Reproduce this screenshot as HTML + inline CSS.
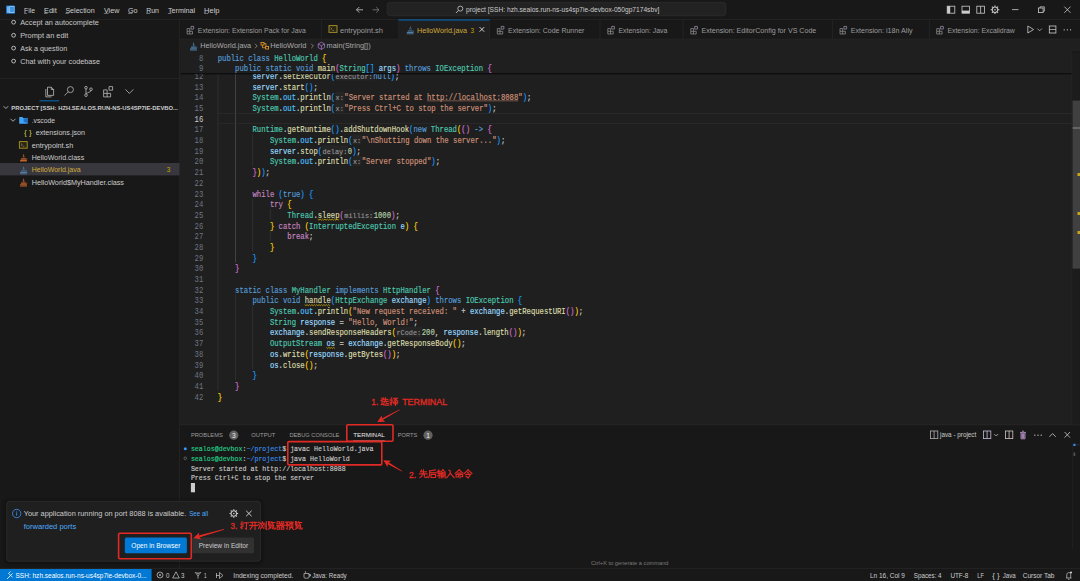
<!DOCTYPE html>
<html><head><meta charset="utf-8"><title>VS Code</title>
<style>html,body{margin:0;padding:0;background:#181818;overflow:hidden;width:1080px;height:581px}
svg{display:block;font-family:"Liberation Sans", sans-serif}</style></head>
<body><svg width="1080" height="581" viewBox="0 0 1080 581">
<defs><filter id="blur" x="-10%" y="-20%" width="120%" height="140%"><feGaussianBlur stdDeviation="2"/></filter></defs>
<rect x="0.00" y="0.00" width="1080.00" height="581.00" fill="#181818" />
<rect x="180.00" y="39.40" width="900.00" height="385.60" fill="#1f1f1f" />
<rect x="0.00" y="19.20" width="1080.00" height="0.60" fill="#2b2b2b" />
<rect x="6.00" y="5.50" width="9.00" height="8.20" fill="#1a73c8" rx="0.6" />
<rect x="7.20" y="6.40" width="1.60" height="6.40" fill="#8cc4f2" />
<rect x="9.40" y="6.60" width="4.60" height="6.00" fill="none" stroke="#9fd0f7" stroke-width="0.8"/>
<rect x="10.00" y="7.20" width="3.40" height="4.80" fill="#3d95e0" />
<text x="24.10" y="12.80" font-size="7.5" fill="#cccccc" textLength="11.00" lengthAdjust="spacingAndGlyphs" >File</text>
<rect x="24.10" y="13.10" width="2.80" height="0.55" fill="#b0b0b0" />
<text x="44.00" y="12.80" font-size="7.5" fill="#cccccc" textLength="12.80" lengthAdjust="spacingAndGlyphs" >Edit</text>
<rect x="44.00" y="13.10" width="3.60" height="0.55" fill="#b0b0b0" />
<text x="65.40" y="12.80" font-size="7.5" fill="#cccccc" textLength="29.20" lengthAdjust="spacingAndGlyphs" >Selection</text>
<rect x="65.40" y="13.10" width="3.40" height="0.55" fill="#b0b0b0" />
<text x="103.90" y="12.80" font-size="7.5" fill="#cccccc" textLength="15.50" lengthAdjust="spacingAndGlyphs" >View</text>
<rect x="103.90" y="13.10" width="4.60" height="0.55" fill="#b0b0b0" />
<text x="128.00" y="12.80" font-size="7.5" fill="#cccccc" textLength="9.60" lengthAdjust="spacingAndGlyphs" >Go</text>
<rect x="128.00" y="13.10" width="4.40" height="0.55" fill="#b0b0b0" />
<text x="146.20" y="12.80" font-size="7.5" fill="#cccccc" textLength="12.80" lengthAdjust="spacingAndGlyphs" >Run</text>
<rect x="146.20" y="13.10" width="3.80" height="0.55" fill="#b0b0b0" />
<text x="167.90" y="12.80" font-size="7.5" fill="#cccccc" textLength="27.20" lengthAdjust="spacingAndGlyphs" >Terminal</text>
<rect x="167.90" y="13.10" width="3.60" height="0.55" fill="#b0b0b0" />
<text x="204.00" y="12.80" font-size="7.5" fill="#cccccc" textLength="15.50" lengthAdjust="spacingAndGlyphs" >Help</text>
<rect x="204.00" y="13.10" width="4.20" height="0.55" fill="#b0b0b0" />
<path d="M356.5 9.8 H363 M356.5 9.8 L359.3 7 M356.5 9.8 L359.3 12.6" stroke="#cccccc" stroke-width="0.8" fill="none"/>
<path d="M379 9.8 H372.5 M379 9.8 L376.2 7 M379 9.8 L376.2 12.6" stroke="#7a7a7a" stroke-width="0.8" fill="none"/>
<rect x="387.20" y="2.40" width="338.60" height="13.40" fill="#222222" rx="3" stroke="#333333" stroke-width="0.6"/>
<circle cx="460.3" cy="8.6" r="2.5" fill="none" stroke="#cccccc" stroke-width="0.8"/><path d="M458.5 10.4 L455.9 13" stroke="#cccccc" stroke-width="0.9"/>
<text x="466.00" y="12.12" font-size="7.0" fill="#cccccc" textLength="193.30" lengthAdjust="spacingAndGlyphs" >project [SSH: hzh.sealos.run-ns-us4sp7ie-devbox-050gp7174sbv]</text>
<rect x="947.2" y="6.2" width="7.6" height="7" fill="none" stroke="#cccccc" stroke-width="0.8"/><rect x="947.2" y="6.2" width="3" height="7" fill="#cccccc"/>
<rect x="962" y="6.2" width="7.6" height="7" fill="none" stroke="#cccccc" stroke-width="0.8"/><rect x="962" y="10.6" width="7.6" height="2.6" fill="#cccccc"/>
<rect x="976.8" y="6.2" width="7.6" height="7" fill="none" stroke="#cccccc" stroke-width="0.8"/><line x1="980.6" y1="6.2" x2="980.6" y2="13.2" stroke="#cccccc" stroke-width="0.8"/>
<g transform="translate(995,9.7)" fill="#cccccc"><circle r="2.75" fill="none" stroke="#cccccc" stroke-width="1.05"/><rect x="-0.55" y="-4.3" width="1.1" height="1.2" transform="rotate(0)"/><rect x="-0.55" y="-4.3" width="1.1" height="1.2" transform="rotate(45)"/><rect x="-0.55" y="-4.3" width="1.1" height="1.2" transform="rotate(90)"/><rect x="-0.55" y="-4.3" width="1.1" height="1.2" transform="rotate(135)"/><rect x="-0.55" y="-4.3" width="1.1" height="1.2" transform="rotate(180)"/><rect x="-0.55" y="-4.3" width="1.1" height="1.2" transform="rotate(225)"/><rect x="-0.55" y="-4.3" width="1.1" height="1.2" transform="rotate(270)"/><rect x="-0.55" y="-4.3" width="1.1" height="1.2" transform="rotate(315)"/><circle r="0.8"/></g>
<line x1="1012.00" y1="9.60" x2="1018.50" y2="9.60" stroke="#cccccc" stroke-width="0.8" />
<rect x="1038.5" y="8" width="4.6" height="4.6" fill="none" stroke="#cccccc" stroke-width="0.8"/><path d="M1040 8 V6.8 H1044.4 V11.2 H1043.1" fill="none" stroke="#cccccc" stroke-width="0.7"/>
<path d="M1064.3 6.6 L1070.5 12.8 M1070.5 6.6 L1064.3 12.8" stroke="#cccccc" stroke-width="0.8"/>
<rect x="179.40" y="19.80" width="0.60" height="549.00" fill="#2b2b2b" />
<circle cx="13.6" cy="22.20" r="1.9" fill="none" stroke="#bbbbbb" stroke-width="1"/>
<text x="20.20" y="24.83" font-size="7.3" fill="#c8c8c8" textLength="78.70" lengthAdjust="spacingAndGlyphs" >Accept an autocomplete</text>
<circle cx="13.6" cy="35.30" r="1.9" fill="none" stroke="#bbbbbb" stroke-width="1"/>
<text x="20.20" y="37.93" font-size="7.3" fill="#c8c8c8" textLength="48.10" lengthAdjust="spacingAndGlyphs" >Prompt an edit</text>
<circle cx="13.6" cy="48.10" r="1.9" fill="none" stroke="#bbbbbb" stroke-width="1"/>
<text x="20.20" y="50.73" font-size="7.3" fill="#c8c8c8" textLength="47.00" lengthAdjust="spacingAndGlyphs" >Ask a question</text>
<circle cx="13.6" cy="61.10" r="1.9" fill="none" stroke="#bbbbbb" stroke-width="1"/>
<text x="20.20" y="63.73" font-size="7.3" fill="#c8c8c8" textLength="79.80" lengthAdjust="spacingAndGlyphs" >Chat with your codebase</text>
<rect x="0.00" y="78.00" width="179.40" height="0.60" fill="#2b2b2b" />
<g fill="none" stroke="#c4c4c4" stroke-width="0.75"><path d="M47.5 87.2 H51.3 L53.6 89.5 V95.4 H47.5 Z"/><path d="M51.3 87.2 V89.5 H53.6"/><path d="M45.8 89 V96.9 H51.6"/><circle cx="70.4" cy="89.6" r="3"/><path d="M68.3 91.8 L64.6 95.5"/><circle cx="86" cy="87.7" r="1.3"/><circle cx="86" cy="95.2" r="1.3"/><circle cx="91" cy="89.2" r="1.3"/><path d="M86 89 V93.9 M91 90.5 C91 92.5 87 92 86.3 93.9"/><path d="M103.6 89.9 H107.1 V93.4 H103.6 Z M103.6 93.4 V96.9 H107.1 V93.4 M107.1 93.4 H110.6 V96.9 H107.1"/><path d="M109 86.6 H112.6 V90.2 H109 Z"/><path d="M125.4 89.4 L129.4 93.4 L133.4 89.4"/></g>
<rect x="39.50" y="100.40" width="19.50" height="0.90" fill="#0078d4" />
<path d="M3.6 106.2 L5.9 108.5 L8.2 106.2" fill="none" stroke="#cccccc" stroke-width="0.8"/>
<text x="11.30" y="109.73" font-size="6.2" fill="#cccccc" textLength="166.70" lengthAdjust="spacingAndGlyphs" font-weight="bold" >PROJECT [SSH: HZH.SEALOS.RUN-NS-US4SP7IE-DEVBO...</text>
<rect x="0.00" y="163.00" width="179.40" height="12.40" fill="#37373d" />
<path d="M10.5 118.8 L13 121.3 L15.5 118.8" fill="none" stroke="#cccccc" stroke-width="0.8"/>
<path d="M19.2 117 H22.5 L23.5 118.2 H27.6 V123.8 H19.2 Z" fill="#42a5f5"/><path d="M23.5 119.5 L27.8 117.5 V123.5 L23.5 121.5 Z" fill="#1e6fc0"/>
<text x="31.70" y="122.93" font-size="7.3" fill="#cccccc" textLength="23.30" lengthAdjust="spacingAndGlyphs" >.vscode</text>
<text x="24.00" y="135.13" font-size="7.3" fill="#cbcb41" textLength="7.70" lengthAdjust="spacingAndGlyphs" >{ }</text>
<text x="35.80" y="135.13" font-size="7.3" fill="#cccccc" textLength="49.20" lengthAdjust="spacingAndGlyphs" >extensions.json</text>
<rect x="19.4" y="141.6" width="7.8" height="6.6" fill="#2a2510" stroke="#a08a28" stroke-width="1"/><path d="M21 143.6 L22.3 144.6 L21 145.6 M22.6 146.2 H24.4" stroke="#b8b8a0" stroke-width="0.5" fill="none"/>
<text x="31.70" y="147.63" font-size="7.3" fill="#cccccc" textLength="41.60" lengthAdjust="spacingAndGlyphs" >entrypoint.sh</text>
<g transform="translate(19.4,153.2)" fill="#c2632a"><path d="M3.8 0 C5.2 1.6 2.6 2.6 3.6 4.4 L4.4 4.4 C3.6 3 5.8 2 3.8 0 Z"/><path d="M5.2 1.8 C6 2.6 4.8 3.4 5.2 4.4 L5.6 4.4 C5.2 3.6 6.4 2.8 5.2 1.8Z"/><path d="M1.8 5 H6.4 L6.8 6.2 H1.4 Z"/><path d="M1 6.6 H7.2 L7.6 7.8 H0.6 Z"/><path d="M0.4 8.2 H7.8 L7.4 8.9 H0.8 Z"/><path d="M6.6 5.2 C8 5 8 6.6 6.8 6.8" fill="none" stroke="#c2632a" stroke-width="0.5"/></g>
<text x="31.70" y="160.13" font-size="7.3" fill="#cccccc" textLength="52.50" lengthAdjust="spacingAndGlyphs" >HelloWorld.class</text>
<g transform="translate(19.4,165.4)" fill="#4f7fa6"><path d="M3.8 0 C5.2 1.6 2.6 2.6 3.6 4.4 L4.4 4.4 C3.6 3 5.8 2 3.8 0 Z"/><path d="M5.2 1.8 C6 2.6 4.8 3.4 5.2 4.4 L5.6 4.4 C5.2 3.6 6.4 2.8 5.2 1.8Z"/><path d="M1.8 5 H6.4 L6.8 6.2 H1.4 Z"/><path d="M1 6.6 H7.2 L7.6 7.8 H0.6 Z"/><path d="M0.4 8.2 H7.8 L7.4 8.9 H0.8 Z"/><path d="M6.6 5.2 C8 5 8 6.6 6.8 6.8" fill="none" stroke="#4f7fa6" stroke-width="0.5"/></g>
<text x="31.70" y="172.13" font-size="7.3" fill="#d3aa3c" textLength="49.00" lengthAdjust="spacingAndGlyphs" >HelloWorld.java</text>
<text x="166.70" y="172.13" font-size="7.3" fill="#cca700" textLength="3.60" lengthAdjust="spacingAndGlyphs" >3</text>
<g transform="translate(19.4,177.6)" fill="#c2632a"><path d="M3.8 0 C5.2 1.6 2.6 2.6 3.6 4.4 L4.4 4.4 C3.6 3 5.8 2 3.8 0 Z"/><path d="M5.2 1.8 C6 2.6 4.8 3.4 5.2 4.4 L5.6 4.4 C5.2 3.6 6.4 2.8 5.2 1.8Z"/><path d="M1.8 5 H6.4 L6.8 6.2 H1.4 Z"/><path d="M1 6.6 H7.2 L7.6 7.8 H0.6 Z"/><path d="M0.4 8.2 H7.8 L7.4 8.9 H0.8 Z"/><path d="M6.6 5.2 C8 5 8 6.6 6.8 6.8" fill="none" stroke="#c2632a" stroke-width="0.5"/></g>
<text x="31.70" y="184.63" font-size="7.3" fill="#cccccc" textLength="92.30" lengthAdjust="spacingAndGlyphs" >HelloWorld$MyHandler.class</text>
<rect x="180.00" y="38.80" width="900.00" height="0.60" fill="#2b2b2b" />
<rect x="321.20" y="19.80" width="0.60" height="19.00" fill="#2b2b2b" />
<text x="197.80" y="32.86" font-size="7.4" fill="#9d9d9d" textLength="108.10" lengthAdjust="spacingAndGlyphs" >Extension: Extension Pack for Java</text>
<g transform="translate(186.60,26.0)" fill="none" stroke="#9a9a9a" stroke-width="0.7"><path d="M0.5 2.6 H3.2 V5.3 H0.5 Z M0.5 5.3 V8 H3.2 V5.3 M3.2 5.3 H5.9 V8 H3.2"/><path d="M4.4 0.4 H7.1 V3.1 H4.4 Z" stroke="#a89ab6"/></g>
<rect x="398.20" y="19.80" width="0.60" height="19.00" fill="#2b2b2b" />
<text x="340.00" y="32.86" font-size="7.4" fill="#9d9d9d" textLength="43.00" lengthAdjust="spacingAndGlyphs" >entrypoint.sh</text>
<rect x="329.00" y="25.6" width="8" height="6.8" fill="#2a2510" stroke="#a08a28" stroke-width="1"/><path d="M330.60 27.7 L331.90 28.7 L330.60 29.7 M332.30 30.4 H334.10" stroke="#b8b8a0" stroke-width="0.5" fill="none"/>
<rect x="398.50" y="19.80" width="91.10" height="19.60" fill="#1f1f1f" />
<rect x="398.50" y="19.50" width="91.10" height="0.90" fill="#0078d4" />
<rect x="489.30" y="19.80" width="0.60" height="19.00" fill="#2b2b2b" />
<text x="417.00" y="32.86" font-size="7.4" fill="#d3aa3c" textLength="50.00" lengthAdjust="spacingAndGlyphs" >HelloWorld.java</text>
<g transform="translate(406.1,25.4)" fill="#4f7fa6"><path d="M3.8 0 C5.2 1.6 2.6 2.6 3.6 4.4 L4.4 4.4 C3.6 3 5.8 2 3.8 0 Z"/><path d="M5.2 1.8 C6 2.6 4.8 3.4 5.2 4.4 L5.6 4.4 C5.2 3.6 6.4 2.8 5.2 1.8Z"/><path d="M1.8 5 H6.4 L6.8 6.2 H1.4 Z"/><path d="M1 6.6 H7.2 L7.6 7.8 H0.6 Z"/><path d="M0.4 8.2 H7.8 L7.4 8.9 H0.8 Z"/><path d="M6.6 5.2 C8 5 8 6.6 6.8 6.8" fill="none" stroke="#4f7fa6" stroke-width="0.5"/></g>
<rect x="599.70" y="19.80" width="0.60" height="19.00" fill="#2b2b2b" />
<text x="508.00" y="32.86" font-size="7.4" fill="#9d9d9d" textLength="76.40" lengthAdjust="spacingAndGlyphs" >Extension: Code Runner</text>
<g transform="translate(496.80,26.0)" fill="none" stroke="#9a9a9a" stroke-width="0.7"><path d="M0.5 2.6 H3.2 V5.3 H0.5 Z M0.5 5.3 V8 H3.2 V5.3 M3.2 5.3 H5.9 V8 H3.2"/><path d="M4.4 0.4 H7.1 V3.1 H4.4 Z" stroke="#a89ab6"/></g>
<rect x="682.70" y="19.80" width="0.60" height="19.00" fill="#2b2b2b" />
<text x="618.50" y="32.86" font-size="7.4" fill="#9d9d9d" textLength="48.90" lengthAdjust="spacingAndGlyphs" >Extension: Java</text>
<g transform="translate(607.30,26.0)" fill="none" stroke="#9a9a9a" stroke-width="0.7"><path d="M0.5 2.6 H3.2 V5.3 H0.5 Z M0.5 5.3 V8 H3.2 V5.3 M3.2 5.3 H5.9 V8 H3.2"/><path d="M4.4 0.4 H7.1 V3.1 H4.4 Z" stroke="#a89ab6"/></g>
<rect x="832.30" y="19.80" width="0.60" height="19.00" fill="#2b2b2b" />
<text x="701.50" y="32.86" font-size="7.4" fill="#9d9d9d" textLength="114.80" lengthAdjust="spacingAndGlyphs" >Extension: EditorConfig for VS Code</text>
<g transform="translate(690.30,26.0)" fill="none" stroke="#9a9a9a" stroke-width="0.7"><path d="M0.5 2.6 H3.2 V5.3 H0.5 Z M0.5 5.3 V8 H3.2 V5.3 M3.2 5.3 H5.9 V8 H3.2"/><path d="M4.4 0.4 H7.1 V3.1 H4.4 Z" stroke="#a89ab6"/></g>
<rect x="929.30" y="19.80" width="0.60" height="19.00" fill="#2b2b2b" />
<text x="850.70" y="32.86" font-size="7.4" fill="#9d9d9d" textLength="61.90" lengthAdjust="spacingAndGlyphs" >Extension: i18n Ally</text>
<g transform="translate(839.50,26.0)" fill="none" stroke="#9a9a9a" stroke-width="0.7"><path d="M0.5 2.6 H3.2 V5.3 H0.5 Z M0.5 5.3 V8 H3.2 V5.3 M3.2 5.3 H5.9 V8 H3.2"/><path d="M4.4 0.4 H7.1 V3.1 H4.4 Z" stroke="#a89ab6"/></g>
<text x="947.40" y="32.86" font-size="7.4" fill="#9d9d9d" textLength="67.40" lengthAdjust="spacingAndGlyphs" >Extension: Excalidraw</text>
<g transform="translate(936.20,26.0)" fill="none" stroke="#9a9a9a" stroke-width="0.7"><path d="M0.5 2.6 H3.2 V5.3 H0.5 Z M0.5 5.3 V8 H3.2 V5.3 M3.2 5.3 H5.9 V8 H3.2"/><path d="M4.4 0.4 H7.1 V3.1 H4.4 Z" stroke="#a89ab6"/></g>
<text x="470.40" y="32.86" font-size="7.4" fill="#cca700" textLength="3.60" lengthAdjust="spacingAndGlyphs" >3</text>
<path d="M479.6 27.1 L484.2 31.7 M484.2 27.1 L479.6 31.7" stroke="#e0e0e0" stroke-width="0.9"/>
<path d="M1027.8 26 L1033.6 29.5 L1027.8 33 Z" fill="none" stroke="#cccccc" stroke-width="0.8"/><path d="M1037.4 28.6 L1039.6 30.8 L1041.8 28.6" fill="none" stroke="#cccccc" stroke-width="0.7"/>
<rect x="1049.3" y="26" width="6.6" height="7" fill="none" stroke="#cccccc" stroke-width="0.8"/><line x1="1049.3" y1="29.5" x2="1055.9" y2="29.5" stroke="#cccccc" stroke-width="0.7"/>
<circle cx="1064.2" cy="29.8" r="0.65" fill="#cccccc"/>
<circle cx="1067.4" cy="29.8" r="0.65" fill="#cccccc"/>
<circle cx="1070.6" cy="29.8" r="0.65" fill="#cccccc"/>
<g transform="translate(189.4,41.6)" fill="#4f7fa6"><path d="M3.8 0 C5.2 1.6 2.6 2.6 3.6 4.4 L4.4 4.4 C3.6 3 5.8 2 3.8 0 Z"/><path d="M5.2 1.8 C6 2.6 4.8 3.4 5.2 4.4 L5.6 4.4 C5.2 3.6 6.4 2.8 5.2 1.8Z"/><path d="M1.8 5 H6.4 L6.8 6.2 H1.4 Z"/><path d="M1 6.6 H7.2 L7.6 7.8 H0.6 Z"/><path d="M0.4 8.2 H7.8 L7.4 8.9 H0.8 Z"/><path d="M6.6 5.2 C8 5 8 6.6 6.8 6.8" fill="none" stroke="#4f7fa6" stroke-width="0.5"/></g>
<text x="200.20" y="48.43" font-size="7.3" fill="#a9a9a9" textLength="51.00" lengthAdjust="spacingAndGlyphs" >HelloWorld.java</text>
<path d="M255 43.8 L257.2 46 L255 48.2" fill="none" stroke="#a0a0a0" stroke-width="0.7"/>
<g fill="none" stroke="#ee9d28" stroke-width="0.8"><rect x="261" y="42.4" width="3" height="2.6"/><rect x="265.6" y="46.4" width="3" height="2.6"/><path d="M264 43.7 H266 V46.4 M262.5 45 V47.7 H265.6"/></g>
<text x="270.20" y="48.43" font-size="7.3" fill="#a9a9a9" textLength="36.20" lengthAdjust="spacingAndGlyphs" >HelloWorld</text>
<path d="M311.2 43.8 L313.4 46 L311.2 48.2" fill="none" stroke="#a0a0a0" stroke-width="0.7"/>
<path d="M321.4 42.2 L324.6 44 V47.6 L321.4 49.4 L318.2 47.6 V44 Z M318.2 44 L321.4 45.8 L324.6 44 M321.4 45.8 V49.4" fill="none" stroke="#b180d7" stroke-width="0.7"/>
<text x="326.60" y="48.43" font-size="7.3" fill="#a9a9a9" textLength="44.00" lengthAdjust="spacingAndGlyphs" >main(String[])</text>
<rect x="217.70" y="73.10" width="0.60" height="317.63" fill="#3a3a3a" />
<rect x="235.10" y="73.10" width="0.60" height="189.38" fill="#5a5a5a" />
<rect x="235.10" y="294.55" width="0.60" height="85.49" fill="#3a3a3a" />
<rect x="252.50" y="134.23" width="0.60" height="32.06" fill="#3a3a3a" />
<rect x="252.50" y="198.36" width="0.60" height="53.43" fill="#3a3a3a" />
<rect x="252.50" y="305.24" width="0.60" height="64.12" fill="#3a3a3a" />
<rect x="269.90" y="209.05" width="0.60" height="10.68" fill="#3a3a3a" />
<rect x="269.90" y="230.42" width="0.60" height="10.68" fill="#3a3a3a" />
<rect x="218.00" y="113.40" width="854.00" height="0.60" fill="#303030" />
<rect x="218.00" y="123.30" width="854.00" height="0.60" fill="#303030" />
<text x="252.50" y="78.98" font-size="8.2" fill="#9cdcfe" font-family='"Liberation Mono", monospace' textLength="26.10" lengthAdjust="spacingAndGlyphs" stroke="#9cdcfe" stroke-width="0.16">server</text>
<text x="278.60" y="78.98" font-size="8.2" fill="#cccccc" font-family='"Liberation Mono", monospace' textLength="4.35" lengthAdjust="spacingAndGlyphs" stroke="#cccccc" stroke-width="0.16">.</text>
<text x="282.95" y="78.98" font-size="8.2" fill="#dcdcaa" font-family='"Liberation Mono", monospace' textLength="47.85" lengthAdjust="spacingAndGlyphs" stroke="#dcdcaa" stroke-width="0.16">setExecutor</text>
<text x="330.80" y="78.98" font-size="8.2" fill="#179fff" font-family='"Liberation Mono", monospace' textLength="4.35" lengthAdjust="spacingAndGlyphs" stroke="#179fff" stroke-width="0.16">(</text>
<rect x="335.15" y="70.45" width="38.07" height="10.00" fill="rgba(139,139,139,0.06)" rx="1" />
<text x="335.55" y="78.89" font-size="8.0" fill="#9a9a9a" font-family='"Liberation Mono", monospace' textLength="37.17" lengthAdjust="spacingAndGlyphs" stroke="#9a9a9a" stroke-width="0.1">executor:</text>
<text x="373.22" y="78.98" font-size="8.2" fill="#569cd6" font-family='"Liberation Mono", monospace' textLength="17.40" lengthAdjust="spacingAndGlyphs" stroke="#569cd6" stroke-width="0.16">null</text>
<text x="390.62" y="78.98" font-size="8.2" fill="#179fff" font-family='"Liberation Mono", monospace' textLength="4.35" lengthAdjust="spacingAndGlyphs" stroke="#179fff" stroke-width="0.16">)</text>
<text x="394.97" y="78.98" font-size="8.2" fill="#cccccc" font-family='"Liberation Mono", monospace' textLength="4.35" lengthAdjust="spacingAndGlyphs" stroke="#cccccc" stroke-width="0.16">;</text>
<text x="252.50" y="89.66" font-size="8.2" fill="#9cdcfe" font-family='"Liberation Mono", monospace' textLength="26.10" lengthAdjust="spacingAndGlyphs" stroke="#9cdcfe" stroke-width="0.16">server</text>
<text x="278.60" y="89.66" font-size="8.2" fill="#cccccc" font-family='"Liberation Mono", monospace' textLength="4.35" lengthAdjust="spacingAndGlyphs" stroke="#cccccc" stroke-width="0.16">.</text>
<text x="282.95" y="89.66" font-size="8.2" fill="#dcdcaa" font-family='"Liberation Mono", monospace' textLength="21.75" lengthAdjust="spacingAndGlyphs" stroke="#dcdcaa" stroke-width="0.16">start</text>
<text x="304.70" y="89.66" font-size="8.2" fill="#179fff" font-family='"Liberation Mono", monospace' textLength="4.35" lengthAdjust="spacingAndGlyphs" stroke="#179fff" stroke-width="0.16">(</text>
<text x="309.05" y="89.66" font-size="8.2" fill="#179fff" font-family='"Liberation Mono", monospace' textLength="4.35" lengthAdjust="spacingAndGlyphs" stroke="#179fff" stroke-width="0.16">)</text>
<text x="313.40" y="89.66" font-size="8.2" fill="#cccccc" font-family='"Liberation Mono", monospace' textLength="4.35" lengthAdjust="spacingAndGlyphs" stroke="#cccccc" stroke-width="0.16">;</text>
<text x="252.50" y="100.35" font-size="8.2" fill="#4ec9b0" font-family='"Liberation Mono", monospace' textLength="26.10" lengthAdjust="spacingAndGlyphs" stroke="#4ec9b0" stroke-width="0.16">System</text>
<text x="278.60" y="100.35" font-size="8.2" fill="#cccccc" font-family='"Liberation Mono", monospace' textLength="4.35" lengthAdjust="spacingAndGlyphs" stroke="#cccccc" stroke-width="0.16">.</text>
<text x="282.95" y="100.35" font-size="8.2" fill="#4fc1ff" font-family='"Liberation Mono", monospace' textLength="13.05" lengthAdjust="spacingAndGlyphs" stroke="#4fc1ff" stroke-width="0.16">out</text>
<text x="296.00" y="100.35" font-size="8.2" fill="#cccccc" font-family='"Liberation Mono", monospace' textLength="4.35" lengthAdjust="spacingAndGlyphs" stroke="#cccccc" stroke-width="0.16">.</text>
<text x="300.35" y="100.35" font-size="8.2" fill="#dcdcaa" font-family='"Liberation Mono", monospace' textLength="30.45" lengthAdjust="spacingAndGlyphs" stroke="#dcdcaa" stroke-width="0.16">println</text>
<text x="330.80" y="100.35" font-size="8.2" fill="#179fff" font-family='"Liberation Mono", monospace' textLength="4.35" lengthAdjust="spacingAndGlyphs" stroke="#179fff" stroke-width="0.16">(</text>
<rect x="335.15" y="91.83" width="9.16" height="10.00" fill="rgba(139,139,139,0.06)" rx="1" />
<text x="335.55" y="100.27" font-size="8.0" fill="#9a9a9a" font-family='"Liberation Mono", monospace' textLength="8.26" lengthAdjust="spacingAndGlyphs" stroke="#9a9a9a" stroke-width="0.1">x:</text>
<text x="344.31" y="100.35" font-size="8.2" fill="#ce9178" font-family='"Liberation Mono", monospace' textLength="178.35" lengthAdjust="spacingAndGlyphs" stroke="#ce9178" stroke-width="0.16">&quot;Server started at http://localhost:8088&quot;</text>
<line x1="426.96" y1="100.83" x2="518.31" y2="100.83" stroke="#ce9178" stroke-width="0.5" />
<text x="522.66" y="100.35" font-size="8.2" fill="#179fff" font-family='"Liberation Mono", monospace' textLength="4.35" lengthAdjust="spacingAndGlyphs" stroke="#179fff" stroke-width="0.16">)</text>
<text x="527.01" y="100.35" font-size="8.2" fill="#cccccc" font-family='"Liberation Mono", monospace' textLength="4.35" lengthAdjust="spacingAndGlyphs" stroke="#cccccc" stroke-width="0.16">;</text>
<text x="252.50" y="111.04" font-size="8.2" fill="#4ec9b0" font-family='"Liberation Mono", monospace' textLength="26.10" lengthAdjust="spacingAndGlyphs" stroke="#4ec9b0" stroke-width="0.16">System</text>
<text x="278.60" y="111.04" font-size="8.2" fill="#cccccc" font-family='"Liberation Mono", monospace' textLength="4.35" lengthAdjust="spacingAndGlyphs" stroke="#cccccc" stroke-width="0.16">.</text>
<text x="282.95" y="111.04" font-size="8.2" fill="#4fc1ff" font-family='"Liberation Mono", monospace' textLength="13.05" lengthAdjust="spacingAndGlyphs" stroke="#4fc1ff" stroke-width="0.16">out</text>
<text x="296.00" y="111.04" font-size="8.2" fill="#cccccc" font-family='"Liberation Mono", monospace' textLength="4.35" lengthAdjust="spacingAndGlyphs" stroke="#cccccc" stroke-width="0.16">.</text>
<text x="300.35" y="111.04" font-size="8.2" fill="#dcdcaa" font-family='"Liberation Mono", monospace' textLength="30.45" lengthAdjust="spacingAndGlyphs" stroke="#dcdcaa" stroke-width="0.16">println</text>
<text x="330.80" y="111.04" font-size="8.2" fill="#179fff" font-family='"Liberation Mono", monospace' textLength="4.35" lengthAdjust="spacingAndGlyphs" stroke="#179fff" stroke-width="0.16">(</text>
<rect x="335.15" y="102.51" width="9.16" height="10.00" fill="rgba(139,139,139,0.06)" rx="1" />
<text x="335.55" y="110.95" font-size="8.0" fill="#9a9a9a" font-family='"Liberation Mono", monospace' textLength="8.26" lengthAdjust="spacingAndGlyphs" stroke="#9a9a9a" stroke-width="0.1">x:</text>
<text x="344.31" y="111.04" font-size="8.2" fill="#ce9178" font-family='"Liberation Mono", monospace' textLength="143.55" lengthAdjust="spacingAndGlyphs" stroke="#ce9178" stroke-width="0.16">&quot;Press Ctrl+C to stop the server&quot;</text>
<text x="487.86" y="111.04" font-size="8.2" fill="#179fff" font-family='"Liberation Mono", monospace' textLength="4.35" lengthAdjust="spacingAndGlyphs" stroke="#179fff" stroke-width="0.16">)</text>
<text x="492.21" y="111.04" font-size="8.2" fill="#cccccc" font-family='"Liberation Mono", monospace' textLength="4.35" lengthAdjust="spacingAndGlyphs" stroke="#cccccc" stroke-width="0.16">;</text>
<text x="252.50" y="132.41" font-size="8.2" fill="#4ec9b0" font-family='"Liberation Mono", monospace' textLength="30.45" lengthAdjust="spacingAndGlyphs" stroke="#4ec9b0" stroke-width="0.16">Runtime</text>
<text x="282.95" y="132.41" font-size="8.2" fill="#cccccc" font-family='"Liberation Mono", monospace' textLength="4.35" lengthAdjust="spacingAndGlyphs" stroke="#cccccc" stroke-width="0.16">.</text>
<text x="287.30" y="132.41" font-size="8.2" fill="#dcdcaa" font-family='"Liberation Mono", monospace' textLength="43.50" lengthAdjust="spacingAndGlyphs" stroke="#dcdcaa" stroke-width="0.16">getRuntime</text>
<text x="330.80" y="132.41" font-size="8.2" fill="#179fff" font-family='"Liberation Mono", monospace' textLength="4.35" lengthAdjust="spacingAndGlyphs" stroke="#179fff" stroke-width="0.16">(</text>
<text x="335.15" y="132.41" font-size="8.2" fill="#179fff" font-family='"Liberation Mono", monospace' textLength="4.35" lengthAdjust="spacingAndGlyphs" stroke="#179fff" stroke-width="0.16">)</text>
<text x="339.50" y="132.41" font-size="8.2" fill="#cccccc" font-family='"Liberation Mono", monospace' textLength="4.35" lengthAdjust="spacingAndGlyphs" stroke="#cccccc" stroke-width="0.16">.</text>
<text x="343.85" y="132.41" font-size="8.2" fill="#dcdcaa" font-family='"Liberation Mono", monospace' textLength="65.25" lengthAdjust="spacingAndGlyphs" stroke="#dcdcaa" stroke-width="0.16">addShutdownHook</text>
<text x="409.10" y="132.41" font-size="8.2" fill="#179fff" font-family='"Liberation Mono", monospace' textLength="4.35" lengthAdjust="spacingAndGlyphs" stroke="#179fff" stroke-width="0.16">(</text>
<text x="413.45" y="132.41" font-size="8.2" fill="#569cd6" font-family='"Liberation Mono", monospace' textLength="13.05" lengthAdjust="spacingAndGlyphs" stroke="#569cd6" stroke-width="0.16">new</text>
<text x="430.85" y="132.41" font-size="8.2" fill="#4ec9b0" font-family='"Liberation Mono", monospace' textLength="26.10" lengthAdjust="spacingAndGlyphs" stroke="#4ec9b0" stroke-width="0.16">Thread</text>
<text x="456.95" y="132.41" font-size="8.2" fill="#ffd700" font-family='"Liberation Mono", monospace' textLength="4.35" lengthAdjust="spacingAndGlyphs" stroke="#ffd700" stroke-width="0.16">(</text>
<text x="461.30" y="132.41" font-size="8.2" fill="#da70d6" font-family='"Liberation Mono", monospace' textLength="4.35" lengthAdjust="spacingAndGlyphs" stroke="#da70d6" stroke-width="0.16">(</text>
<text x="465.65" y="132.41" font-size="8.2" fill="#da70d6" font-family='"Liberation Mono", monospace' textLength="4.35" lengthAdjust="spacingAndGlyphs" stroke="#da70d6" stroke-width="0.16">)</text>
<text x="474.35" y="132.41" font-size="8.2" fill="#569cd6" font-family='"Liberation Mono", monospace' textLength="8.70" lengthAdjust="spacingAndGlyphs" stroke="#569cd6" stroke-width="0.16">-&gt;</text>
<text x="487.40" y="132.41" font-size="8.2" fill="#da70d6" font-family='"Liberation Mono", monospace' textLength="4.35" lengthAdjust="spacingAndGlyphs" stroke="#da70d6" stroke-width="0.16">{</text>
<text x="269.90" y="143.10" font-size="8.2" fill="#4ec9b0" font-family='"Liberation Mono", monospace' textLength="26.10" lengthAdjust="spacingAndGlyphs" stroke="#4ec9b0" stroke-width="0.16">System</text>
<text x="296.00" y="143.10" font-size="8.2" fill="#cccccc" font-family='"Liberation Mono", monospace' textLength="4.35" lengthAdjust="spacingAndGlyphs" stroke="#cccccc" stroke-width="0.16">.</text>
<text x="300.35" y="143.10" font-size="8.2" fill="#4fc1ff" font-family='"Liberation Mono", monospace' textLength="13.05" lengthAdjust="spacingAndGlyphs" stroke="#4fc1ff" stroke-width="0.16">out</text>
<text x="313.40" y="143.10" font-size="8.2" fill="#cccccc" font-family='"Liberation Mono", monospace' textLength="4.35" lengthAdjust="spacingAndGlyphs" stroke="#cccccc" stroke-width="0.16">.</text>
<text x="317.75" y="143.10" font-size="8.2" fill="#dcdcaa" font-family='"Liberation Mono", monospace' textLength="30.45" lengthAdjust="spacingAndGlyphs" stroke="#dcdcaa" stroke-width="0.16">println</text>
<text x="348.20" y="143.10" font-size="8.2" fill="#179fff" font-family='"Liberation Mono", monospace' textLength="4.35" lengthAdjust="spacingAndGlyphs" stroke="#179fff" stroke-width="0.16">(</text>
<rect x="352.55" y="134.57" width="9.16" height="10.00" fill="rgba(139,139,139,0.06)" rx="1" />
<text x="352.95" y="143.01" font-size="8.0" fill="#9a9a9a" font-family='"Liberation Mono", monospace' textLength="8.26" lengthAdjust="spacingAndGlyphs" stroke="#9a9a9a" stroke-width="0.1">x:</text>
<text x="361.71" y="143.10" font-size="8.2" fill="#ce9178" font-family='"Liberation Mono", monospace' textLength="134.85" lengthAdjust="spacingAndGlyphs" stroke="#ce9178" stroke-width="0.16">&quot;\nShutting down the server...&quot;</text>
<text x="496.56" y="143.10" font-size="8.2" fill="#179fff" font-family='"Liberation Mono", monospace' textLength="4.35" lengthAdjust="spacingAndGlyphs" stroke="#179fff" stroke-width="0.16">)</text>
<text x="500.91" y="143.10" font-size="8.2" fill="#cccccc" font-family='"Liberation Mono", monospace' textLength="4.35" lengthAdjust="spacingAndGlyphs" stroke="#cccccc" stroke-width="0.16">;</text>
<text x="269.90" y="153.79" font-size="8.2" fill="#9cdcfe" font-family='"Liberation Mono", monospace' textLength="26.10" lengthAdjust="spacingAndGlyphs" stroke="#9cdcfe" stroke-width="0.16">server</text>
<text x="296.00" y="153.79" font-size="8.2" fill="#cccccc" font-family='"Liberation Mono", monospace' textLength="4.35" lengthAdjust="spacingAndGlyphs" stroke="#cccccc" stroke-width="0.16">.</text>
<text x="300.35" y="153.79" font-size="8.2" fill="#dcdcaa" font-family='"Liberation Mono", monospace' textLength="17.40" lengthAdjust="spacingAndGlyphs" stroke="#dcdcaa" stroke-width="0.16">stop</text>
<text x="317.75" y="153.79" font-size="8.2" fill="#179fff" font-family='"Liberation Mono", monospace' textLength="4.35" lengthAdjust="spacingAndGlyphs" stroke="#179fff" stroke-width="0.16">(</text>
<rect x="322.10" y="145.26" width="25.68" height="10.00" fill="rgba(139,139,139,0.06)" rx="1" />
<text x="322.50" y="153.70" font-size="8.0" fill="#9a9a9a" font-family='"Liberation Mono", monospace' textLength="24.78" lengthAdjust="spacingAndGlyphs" stroke="#9a9a9a" stroke-width="0.1">delay:</text>
<text x="347.78" y="153.79" font-size="8.2" fill="#b5cea8" font-family='"Liberation Mono", monospace' textLength="4.35" lengthAdjust="spacingAndGlyphs" stroke="#b5cea8" stroke-width="0.16">0</text>
<text x="352.13" y="153.79" font-size="8.2" fill="#179fff" font-family='"Liberation Mono", monospace' textLength="4.35" lengthAdjust="spacingAndGlyphs" stroke="#179fff" stroke-width="0.16">)</text>
<text x="356.48" y="153.79" font-size="8.2" fill="#cccccc" font-family='"Liberation Mono", monospace' textLength="4.35" lengthAdjust="spacingAndGlyphs" stroke="#cccccc" stroke-width="0.16">;</text>
<text x="269.90" y="164.48" font-size="8.2" fill="#4ec9b0" font-family='"Liberation Mono", monospace' textLength="26.10" lengthAdjust="spacingAndGlyphs" stroke="#4ec9b0" stroke-width="0.16">System</text>
<text x="296.00" y="164.48" font-size="8.2" fill="#cccccc" font-family='"Liberation Mono", monospace' textLength="4.35" lengthAdjust="spacingAndGlyphs" stroke="#cccccc" stroke-width="0.16">.</text>
<text x="300.35" y="164.48" font-size="8.2" fill="#4fc1ff" font-family='"Liberation Mono", monospace' textLength="13.05" lengthAdjust="spacingAndGlyphs" stroke="#4fc1ff" stroke-width="0.16">out</text>
<text x="313.40" y="164.48" font-size="8.2" fill="#cccccc" font-family='"Liberation Mono", monospace' textLength="4.35" lengthAdjust="spacingAndGlyphs" stroke="#cccccc" stroke-width="0.16">.</text>
<text x="317.75" y="164.48" font-size="8.2" fill="#dcdcaa" font-family='"Liberation Mono", monospace' textLength="30.45" lengthAdjust="spacingAndGlyphs" stroke="#dcdcaa" stroke-width="0.16">println</text>
<text x="348.20" y="164.48" font-size="8.2" fill="#179fff" font-family='"Liberation Mono", monospace' textLength="4.35" lengthAdjust="spacingAndGlyphs" stroke="#179fff" stroke-width="0.16">(</text>
<rect x="352.55" y="155.95" width="9.16" height="10.00" fill="rgba(139,139,139,0.06)" rx="1" />
<text x="352.95" y="164.39" font-size="8.0" fill="#9a9a9a" font-family='"Liberation Mono", monospace' textLength="8.26" lengthAdjust="spacingAndGlyphs" stroke="#9a9a9a" stroke-width="0.1">x:</text>
<text x="361.71" y="164.48" font-size="8.2" fill="#ce9178" font-family='"Liberation Mono", monospace' textLength="69.60" lengthAdjust="spacingAndGlyphs" stroke="#ce9178" stroke-width="0.16">&quot;Server stopped&quot;</text>
<text x="431.31" y="164.48" font-size="8.2" fill="#179fff" font-family='"Liberation Mono", monospace' textLength="4.35" lengthAdjust="spacingAndGlyphs" stroke="#179fff" stroke-width="0.16">)</text>
<text x="435.66" y="164.48" font-size="8.2" fill="#cccccc" font-family='"Liberation Mono", monospace' textLength="4.35" lengthAdjust="spacingAndGlyphs" stroke="#cccccc" stroke-width="0.16">;</text>
<text x="252.50" y="175.16" font-size="8.2" fill="#da70d6" font-family='"Liberation Mono", monospace' textLength="4.35" lengthAdjust="spacingAndGlyphs" stroke="#da70d6" stroke-width="0.16">}</text>
<text x="256.85" y="175.16" font-size="8.2" fill="#ffd700" font-family='"Liberation Mono", monospace' textLength="4.35" lengthAdjust="spacingAndGlyphs" stroke="#ffd700" stroke-width="0.16">)</text>
<text x="261.20" y="175.16" font-size="8.2" fill="#179fff" font-family='"Liberation Mono", monospace' textLength="4.35" lengthAdjust="spacingAndGlyphs" stroke="#179fff" stroke-width="0.16">)</text>
<text x="265.55" y="175.16" font-size="8.2" fill="#cccccc" font-family='"Liberation Mono", monospace' textLength="4.35" lengthAdjust="spacingAndGlyphs" stroke="#cccccc" stroke-width="0.16">;</text>
<text x="252.50" y="196.54" font-size="8.2" fill="#c586c0" font-family='"Liberation Mono", monospace' textLength="21.75" lengthAdjust="spacingAndGlyphs" stroke="#c586c0" stroke-width="0.16">while</text>
<text x="278.60" y="196.54" font-size="8.2" fill="#179fff" font-family='"Liberation Mono", monospace' textLength="4.35" lengthAdjust="spacingAndGlyphs" stroke="#179fff" stroke-width="0.16">(</text>
<text x="282.95" y="196.54" font-size="8.2" fill="#569cd6" font-family='"Liberation Mono", monospace' textLength="17.40" lengthAdjust="spacingAndGlyphs" stroke="#569cd6" stroke-width="0.16">true</text>
<text x="300.35" y="196.54" font-size="8.2" fill="#179fff" font-family='"Liberation Mono", monospace' textLength="4.35" lengthAdjust="spacingAndGlyphs" stroke="#179fff" stroke-width="0.16">)</text>
<text x="309.05" y="196.54" font-size="8.2" fill="#179fff" font-family='"Liberation Mono", monospace' textLength="4.35" lengthAdjust="spacingAndGlyphs" stroke="#179fff" stroke-width="0.16">{</text>
<text x="269.90" y="207.23" font-size="8.2" fill="#c586c0" font-family='"Liberation Mono", monospace' textLength="13.05" lengthAdjust="spacingAndGlyphs" stroke="#c586c0" stroke-width="0.16">try</text>
<text x="287.30" y="207.23" font-size="8.2" fill="#ffd700" font-family='"Liberation Mono", monospace' textLength="4.35" lengthAdjust="spacingAndGlyphs" stroke="#ffd700" stroke-width="0.16">{</text>
<text x="287.30" y="217.91" font-size="8.2" fill="#4ec9b0" font-family='"Liberation Mono", monospace' textLength="26.10" lengthAdjust="spacingAndGlyphs" stroke="#4ec9b0" stroke-width="0.16">Thread</text>
<text x="313.40" y="217.91" font-size="8.2" fill="#cccccc" font-family='"Liberation Mono", monospace' textLength="4.35" lengthAdjust="spacingAndGlyphs" stroke="#cccccc" stroke-width="0.16">.</text>
<text x="317.75" y="217.91" font-size="8.2" fill="#dcdcaa" font-family='"Liberation Mono", monospace' textLength="21.75" lengthAdjust="spacingAndGlyphs" stroke="#dcdcaa" stroke-width="0.16">sleep</text>
<polyline points="317.75,219.09 318.95,220.19 320.15,219.09 321.35,220.19 322.55,219.09 323.75,220.19 324.95,219.09 326.15,220.19 327.35,219.09 328.55,220.19 329.75,219.09 330.95,220.19 332.15,219.09 333.35,220.19 334.55,219.09 335.75,220.19 336.95,219.09 338.15,220.19 339.35,219.09" fill="none" stroke="#d4aa00" stroke-width="0.8"/>
<text x="339.50" y="217.91" font-size="8.2" fill="#da70d6" font-family='"Liberation Mono", monospace' textLength="4.35" lengthAdjust="spacingAndGlyphs" stroke="#da70d6" stroke-width="0.16">(</text>
<rect x="343.85" y="209.39" width="29.81" height="10.00" fill="rgba(139,139,139,0.06)" rx="1" />
<text x="344.25" y="217.83" font-size="8.0" fill="#9a9a9a" font-family='"Liberation Mono", monospace' textLength="28.91" lengthAdjust="spacingAndGlyphs" stroke="#9a9a9a" stroke-width="0.1">millis:</text>
<text x="373.66" y="217.91" font-size="8.2" fill="#b5cea8" font-family='"Liberation Mono", monospace' textLength="17.40" lengthAdjust="spacingAndGlyphs" stroke="#b5cea8" stroke-width="0.16">1000</text>
<text x="391.06" y="217.91" font-size="8.2" fill="#da70d6" font-family='"Liberation Mono", monospace' textLength="4.35" lengthAdjust="spacingAndGlyphs" stroke="#da70d6" stroke-width="0.16">)</text>
<text x="395.41" y="217.91" font-size="8.2" fill="#cccccc" font-family='"Liberation Mono", monospace' textLength="4.35" lengthAdjust="spacingAndGlyphs" stroke="#cccccc" stroke-width="0.16">;</text>
<text x="269.90" y="228.60" font-size="8.2" fill="#ffd700" font-family='"Liberation Mono", monospace' textLength="4.35" lengthAdjust="spacingAndGlyphs" stroke="#ffd700" stroke-width="0.16">}</text>
<text x="278.60" y="228.60" font-size="8.2" fill="#c586c0" font-family='"Liberation Mono", monospace' textLength="21.75" lengthAdjust="spacingAndGlyphs" stroke="#c586c0" stroke-width="0.16">catch</text>
<text x="304.70" y="228.60" font-size="8.2" fill="#ffd700" font-family='"Liberation Mono", monospace' textLength="4.35" lengthAdjust="spacingAndGlyphs" stroke="#ffd700" stroke-width="0.16">(</text>
<text x="309.05" y="228.60" font-size="8.2" fill="#4ec9b0" font-family='"Liberation Mono", monospace' textLength="87.00" lengthAdjust="spacingAndGlyphs" stroke="#4ec9b0" stroke-width="0.16">InterruptedException</text>
<text x="400.40" y="228.60" font-size="8.2" fill="#9cdcfe" font-family='"Liberation Mono", monospace' textLength="4.35" lengthAdjust="spacingAndGlyphs" stroke="#9cdcfe" stroke-width="0.16">e</text>
<text x="404.75" y="228.60" font-size="8.2" fill="#ffd700" font-family='"Liberation Mono", monospace' textLength="4.35" lengthAdjust="spacingAndGlyphs" stroke="#ffd700" stroke-width="0.16">)</text>
<text x="413.45" y="228.60" font-size="8.2" fill="#ffd700" font-family='"Liberation Mono", monospace' textLength="4.35" lengthAdjust="spacingAndGlyphs" stroke="#ffd700" stroke-width="0.16">{</text>
<text x="287.30" y="239.29" font-size="8.2" fill="#c586c0" font-family='"Liberation Mono", monospace' textLength="21.75" lengthAdjust="spacingAndGlyphs" stroke="#c586c0" stroke-width="0.16">break</text>
<text x="309.05" y="239.29" font-size="8.2" fill="#cccccc" font-family='"Liberation Mono", monospace' textLength="4.35" lengthAdjust="spacingAndGlyphs" stroke="#cccccc" stroke-width="0.16">;</text>
<text x="269.90" y="249.98" font-size="8.2" fill="#ffd700" font-family='"Liberation Mono", monospace' textLength="4.35" lengthAdjust="spacingAndGlyphs" stroke="#ffd700" stroke-width="0.16">}</text>
<text x="252.50" y="260.66" font-size="8.2" fill="#179fff" font-family='"Liberation Mono", monospace' textLength="4.35" lengthAdjust="spacingAndGlyphs" stroke="#179fff" stroke-width="0.16">}</text>
<text x="235.10" y="271.35" font-size="8.2" fill="#da70d6" font-family='"Liberation Mono", monospace' textLength="4.35" lengthAdjust="spacingAndGlyphs" stroke="#da70d6" stroke-width="0.16">}</text>
<text x="235.10" y="292.73" font-size="8.2" fill="#569cd6" font-family='"Liberation Mono", monospace' textLength="26.10" lengthAdjust="spacingAndGlyphs" stroke="#569cd6" stroke-width="0.16">static</text>
<text x="265.55" y="292.73" font-size="8.2" fill="#569cd6" font-family='"Liberation Mono", monospace' textLength="21.75" lengthAdjust="spacingAndGlyphs" stroke="#569cd6" stroke-width="0.16">class</text>
<text x="291.65" y="292.73" font-size="8.2" fill="#4ec9b0" font-family='"Liberation Mono", monospace' textLength="39.15" lengthAdjust="spacingAndGlyphs" stroke="#4ec9b0" stroke-width="0.16">MyHandler</text>
<text x="335.15" y="292.73" font-size="8.2" fill="#569cd6" font-family='"Liberation Mono", monospace' textLength="43.50" lengthAdjust="spacingAndGlyphs" stroke="#569cd6" stroke-width="0.16">implements</text>
<text x="383.00" y="292.73" font-size="8.2" fill="#4ec9b0" font-family='"Liberation Mono", monospace' textLength="47.85" lengthAdjust="spacingAndGlyphs" stroke="#4ec9b0" stroke-width="0.16">HttpHandler</text>
<text x="435.20" y="292.73" font-size="8.2" fill="#da70d6" font-family='"Liberation Mono", monospace' textLength="4.35" lengthAdjust="spacingAndGlyphs" stroke="#da70d6" stroke-width="0.16">{</text>
<text x="252.50" y="303.41" font-size="8.2" fill="#569cd6" font-family='"Liberation Mono", monospace' textLength="26.10" lengthAdjust="spacingAndGlyphs" stroke="#569cd6" stroke-width="0.16">public</text>
<text x="282.95" y="303.41" font-size="8.2" fill="#569cd6" font-family='"Liberation Mono", monospace' textLength="17.40" lengthAdjust="spacingAndGlyphs" stroke="#569cd6" stroke-width="0.16">void</text>
<text x="304.70" y="303.41" font-size="8.2" fill="#dcdcaa" font-family='"Liberation Mono", monospace' textLength="26.10" lengthAdjust="spacingAndGlyphs" stroke="#dcdcaa" stroke-width="0.16">handle</text>
<polyline points="304.70,304.59 305.90,305.69 307.10,304.59 308.30,305.69 309.50,304.59 310.70,305.69 311.90,304.59 313.10,305.69 314.30,304.59 315.50,305.69 316.70,304.59 317.90,305.69 319.10,304.59 320.30,305.69 321.50,304.59 322.70,305.69 323.90,304.59 325.10,305.69 326.30,304.59 327.50,305.69 328.70,304.59 329.90,305.69" fill="none" stroke="#d4aa00" stroke-width="0.8"/>
<text x="330.80" y="303.41" font-size="8.2" fill="#179fff" font-family='"Liberation Mono", monospace' textLength="4.35" lengthAdjust="spacingAndGlyphs" stroke="#179fff" stroke-width="0.16">(</text>
<text x="335.15" y="303.41" font-size="8.2" fill="#4ec9b0" font-family='"Liberation Mono", monospace' textLength="52.20" lengthAdjust="spacingAndGlyphs" stroke="#4ec9b0" stroke-width="0.16">HttpExchange</text>
<text x="391.70" y="303.41" font-size="8.2" fill="#9cdcfe" font-family='"Liberation Mono", monospace' textLength="34.80" lengthAdjust="spacingAndGlyphs" stroke="#9cdcfe" stroke-width="0.16">exchange</text>
<text x="426.50" y="303.41" font-size="8.2" fill="#179fff" font-family='"Liberation Mono", monospace' textLength="4.35" lengthAdjust="spacingAndGlyphs" stroke="#179fff" stroke-width="0.16">)</text>
<text x="435.20" y="303.41" font-size="8.2" fill="#569cd6" font-family='"Liberation Mono", monospace' textLength="26.10" lengthAdjust="spacingAndGlyphs" stroke="#569cd6" stroke-width="0.16">throws</text>
<text x="465.65" y="303.41" font-size="8.2" fill="#4ec9b0" font-family='"Liberation Mono", monospace' textLength="47.85" lengthAdjust="spacingAndGlyphs" stroke="#4ec9b0" stroke-width="0.16">IOException</text>
<text x="517.85" y="303.41" font-size="8.2" fill="#179fff" font-family='"Liberation Mono", monospace' textLength="4.35" lengthAdjust="spacingAndGlyphs" stroke="#179fff" stroke-width="0.16">{</text>
<text x="269.90" y="314.10" font-size="8.2" fill="#4ec9b0" font-family='"Liberation Mono", monospace' textLength="26.10" lengthAdjust="spacingAndGlyphs" stroke="#4ec9b0" stroke-width="0.16">System</text>
<text x="296.00" y="314.10" font-size="8.2" fill="#cccccc" font-family='"Liberation Mono", monospace' textLength="4.35" lengthAdjust="spacingAndGlyphs" stroke="#cccccc" stroke-width="0.16">.</text>
<text x="300.35" y="314.10" font-size="8.2" fill="#4fc1ff" font-family='"Liberation Mono", monospace' textLength="13.05" lengthAdjust="spacingAndGlyphs" stroke="#4fc1ff" stroke-width="0.16">out</text>
<text x="313.40" y="314.10" font-size="8.2" fill="#cccccc" font-family='"Liberation Mono", monospace' textLength="4.35" lengthAdjust="spacingAndGlyphs" stroke="#cccccc" stroke-width="0.16">.</text>
<text x="317.75" y="314.10" font-size="8.2" fill="#dcdcaa" font-family='"Liberation Mono", monospace' textLength="30.45" lengthAdjust="spacingAndGlyphs" stroke="#dcdcaa" stroke-width="0.16">println</text>
<text x="348.20" y="314.10" font-size="8.2" fill="#ffd700" font-family='"Liberation Mono", monospace' textLength="4.35" lengthAdjust="spacingAndGlyphs" stroke="#ffd700" stroke-width="0.16">(</text>
<text x="352.55" y="314.10" font-size="8.2" fill="#ce9178" font-family='"Liberation Mono", monospace' textLength="104.40" lengthAdjust="spacingAndGlyphs" stroke="#ce9178" stroke-width="0.16">&quot;New request received: &quot;</text>
<text x="461.30" y="314.10" font-size="8.2" fill="#cccccc" font-family='"Liberation Mono", monospace' textLength="4.35" lengthAdjust="spacingAndGlyphs" stroke="#cccccc" stroke-width="0.16">+</text>
<text x="470.00" y="314.10" font-size="8.2" fill="#9cdcfe" font-family='"Liberation Mono", monospace' textLength="34.80" lengthAdjust="spacingAndGlyphs" stroke="#9cdcfe" stroke-width="0.16">exchange</text>
<text x="504.80" y="314.10" font-size="8.2" fill="#cccccc" font-family='"Liberation Mono", monospace' textLength="4.35" lengthAdjust="spacingAndGlyphs" stroke="#cccccc" stroke-width="0.16">.</text>
<text x="509.15" y="314.10" font-size="8.2" fill="#dcdcaa" font-family='"Liberation Mono", monospace' textLength="56.55" lengthAdjust="spacingAndGlyphs" stroke="#dcdcaa" stroke-width="0.16">getRequestURI</text>
<text x="565.70" y="314.10" font-size="8.2" fill="#da70d6" font-family='"Liberation Mono", monospace' textLength="4.35" lengthAdjust="spacingAndGlyphs" stroke="#da70d6" stroke-width="0.16">(</text>
<text x="570.05" y="314.10" font-size="8.2" fill="#da70d6" font-family='"Liberation Mono", monospace' textLength="4.35" lengthAdjust="spacingAndGlyphs" stroke="#da70d6" stroke-width="0.16">)</text>
<text x="574.40" y="314.10" font-size="8.2" fill="#ffd700" font-family='"Liberation Mono", monospace' textLength="4.35" lengthAdjust="spacingAndGlyphs" stroke="#ffd700" stroke-width="0.16">)</text>
<text x="578.75" y="314.10" font-size="8.2" fill="#cccccc" font-family='"Liberation Mono", monospace' textLength="4.35" lengthAdjust="spacingAndGlyphs" stroke="#cccccc" stroke-width="0.16">;</text>
<text x="269.90" y="324.79" font-size="8.2" fill="#4ec9b0" font-family='"Liberation Mono", monospace' textLength="26.10" lengthAdjust="spacingAndGlyphs" stroke="#4ec9b0" stroke-width="0.16">String</text>
<text x="300.35" y="324.79" font-size="8.2" fill="#9cdcfe" font-family='"Liberation Mono", monospace' textLength="34.80" lengthAdjust="spacingAndGlyphs" stroke="#9cdcfe" stroke-width="0.16">response</text>
<text x="339.50" y="324.79" font-size="8.2" fill="#cccccc" font-family='"Liberation Mono", monospace' textLength="4.35" lengthAdjust="spacingAndGlyphs" stroke="#cccccc" stroke-width="0.16">=</text>
<text x="348.20" y="324.79" font-size="8.2" fill="#ce9178" font-family='"Liberation Mono", monospace' textLength="65.25" lengthAdjust="spacingAndGlyphs" stroke="#ce9178" stroke-width="0.16">&quot;Hello, World!&quot;</text>
<text x="413.45" y="324.79" font-size="8.2" fill="#cccccc" font-family='"Liberation Mono", monospace' textLength="4.35" lengthAdjust="spacingAndGlyphs" stroke="#cccccc" stroke-width="0.16">;</text>
<text x="269.90" y="335.48" font-size="8.2" fill="#9cdcfe" font-family='"Liberation Mono", monospace' textLength="34.80" lengthAdjust="spacingAndGlyphs" stroke="#9cdcfe" stroke-width="0.16">exchange</text>
<text x="304.70" y="335.48" font-size="8.2" fill="#cccccc" font-family='"Liberation Mono", monospace' textLength="4.35" lengthAdjust="spacingAndGlyphs" stroke="#cccccc" stroke-width="0.16">.</text>
<text x="309.05" y="335.48" font-size="8.2" fill="#dcdcaa" font-family='"Liberation Mono", monospace' textLength="82.65" lengthAdjust="spacingAndGlyphs" stroke="#dcdcaa" stroke-width="0.16">sendResponseHeaders</text>
<text x="391.70" y="335.48" font-size="8.2" fill="#ffd700" font-family='"Liberation Mono", monospace' textLength="4.35" lengthAdjust="spacingAndGlyphs" stroke="#ffd700" stroke-width="0.16">(</text>
<rect x="396.05" y="326.95" width="25.68" height="10.00" fill="rgba(139,139,139,0.06)" rx="1" />
<text x="396.45" y="335.39" font-size="8.0" fill="#9a9a9a" font-family='"Liberation Mono", monospace' textLength="24.78" lengthAdjust="spacingAndGlyphs" stroke="#9a9a9a" stroke-width="0.1">rCode:</text>
<text x="421.73" y="335.48" font-size="8.2" fill="#b5cea8" font-family='"Liberation Mono", monospace' textLength="13.05" lengthAdjust="spacingAndGlyphs" stroke="#b5cea8" stroke-width="0.16">200</text>
<text x="434.78" y="335.48" font-size="8.2" fill="#cccccc" font-family='"Liberation Mono", monospace' textLength="4.35" lengthAdjust="spacingAndGlyphs" stroke="#cccccc" stroke-width="0.16">,</text>
<text x="443.48" y="335.48" font-size="8.2" fill="#9cdcfe" font-family='"Liberation Mono", monospace' textLength="34.80" lengthAdjust="spacingAndGlyphs" stroke="#9cdcfe" stroke-width="0.16">response</text>
<text x="478.28" y="335.48" font-size="8.2" fill="#cccccc" font-family='"Liberation Mono", monospace' textLength="4.35" lengthAdjust="spacingAndGlyphs" stroke="#cccccc" stroke-width="0.16">.</text>
<text x="482.63" y="335.48" font-size="8.2" fill="#dcdcaa" font-family='"Liberation Mono", monospace' textLength="26.10" lengthAdjust="spacingAndGlyphs" stroke="#dcdcaa" stroke-width="0.16">length</text>
<text x="508.73" y="335.48" font-size="8.2" fill="#da70d6" font-family='"Liberation Mono", monospace' textLength="4.35" lengthAdjust="spacingAndGlyphs" stroke="#da70d6" stroke-width="0.16">(</text>
<text x="513.08" y="335.48" font-size="8.2" fill="#da70d6" font-family='"Liberation Mono", monospace' textLength="4.35" lengthAdjust="spacingAndGlyphs" stroke="#da70d6" stroke-width="0.16">)</text>
<text x="517.43" y="335.48" font-size="8.2" fill="#ffd700" font-family='"Liberation Mono", monospace' textLength="4.35" lengthAdjust="spacingAndGlyphs" stroke="#ffd700" stroke-width="0.16">)</text>
<text x="521.78" y="335.48" font-size="8.2" fill="#cccccc" font-family='"Liberation Mono", monospace' textLength="4.35" lengthAdjust="spacingAndGlyphs" stroke="#cccccc" stroke-width="0.16">;</text>
<text x="269.90" y="346.16" font-size="8.2" fill="#4ec9b0" font-family='"Liberation Mono", monospace' textLength="52.20" lengthAdjust="spacingAndGlyphs" stroke="#4ec9b0" stroke-width="0.16">OutputStream</text>
<text x="326.45" y="346.16" font-size="8.2" fill="#9cdcfe" font-family='"Liberation Mono", monospace' textLength="8.70" lengthAdjust="spacingAndGlyphs" stroke="#9cdcfe" stroke-width="0.16">os</text>
<polyline points="326.45,347.34 327.65,348.44 328.85,347.34 330.05,348.44 331.25,347.34 332.45,348.44 333.65,347.34 334.85,348.44" fill="none" stroke="#d4aa00" stroke-width="0.8"/>
<text x="339.50" y="346.16" font-size="8.2" fill="#cccccc" font-family='"Liberation Mono", monospace' textLength="4.35" lengthAdjust="spacingAndGlyphs" stroke="#cccccc" stroke-width="0.16">=</text>
<text x="348.20" y="346.16" font-size="8.2" fill="#9cdcfe" font-family='"Liberation Mono", monospace' textLength="34.80" lengthAdjust="spacingAndGlyphs" stroke="#9cdcfe" stroke-width="0.16">exchange</text>
<text x="383.00" y="346.16" font-size="8.2" fill="#cccccc" font-family='"Liberation Mono", monospace' textLength="4.35" lengthAdjust="spacingAndGlyphs" stroke="#cccccc" stroke-width="0.16">.</text>
<text x="387.35" y="346.16" font-size="8.2" fill="#dcdcaa" font-family='"Liberation Mono", monospace' textLength="65.25" lengthAdjust="spacingAndGlyphs" stroke="#dcdcaa" stroke-width="0.16">getResponseBody</text>
<text x="452.60" y="346.16" font-size="8.2" fill="#ffd700" font-family='"Liberation Mono", monospace' textLength="4.35" lengthAdjust="spacingAndGlyphs" stroke="#ffd700" stroke-width="0.16">(</text>
<text x="456.95" y="346.16" font-size="8.2" fill="#ffd700" font-family='"Liberation Mono", monospace' textLength="4.35" lengthAdjust="spacingAndGlyphs" stroke="#ffd700" stroke-width="0.16">)</text>
<text x="461.30" y="346.16" font-size="8.2" fill="#cccccc" font-family='"Liberation Mono", monospace' textLength="4.35" lengthAdjust="spacingAndGlyphs" stroke="#cccccc" stroke-width="0.16">;</text>
<text x="269.90" y="356.85" font-size="8.2" fill="#9cdcfe" font-family='"Liberation Mono", monospace' textLength="8.70" lengthAdjust="spacingAndGlyphs" stroke="#9cdcfe" stroke-width="0.16">os</text>
<text x="278.60" y="356.85" font-size="8.2" fill="#cccccc" font-family='"Liberation Mono", monospace' textLength="4.35" lengthAdjust="spacingAndGlyphs" stroke="#cccccc" stroke-width="0.16">.</text>
<text x="282.95" y="356.85" font-size="8.2" fill="#dcdcaa" font-family='"Liberation Mono", monospace' textLength="21.75" lengthAdjust="spacingAndGlyphs" stroke="#dcdcaa" stroke-width="0.16">write</text>
<text x="304.70" y="356.85" font-size="8.2" fill="#ffd700" font-family='"Liberation Mono", monospace' textLength="4.35" lengthAdjust="spacingAndGlyphs" stroke="#ffd700" stroke-width="0.16">(</text>
<text x="309.05" y="356.85" font-size="8.2" fill="#9cdcfe" font-family='"Liberation Mono", monospace' textLength="34.80" lengthAdjust="spacingAndGlyphs" stroke="#9cdcfe" stroke-width="0.16">response</text>
<text x="343.85" y="356.85" font-size="8.2" fill="#cccccc" font-family='"Liberation Mono", monospace' textLength="4.35" lengthAdjust="spacingAndGlyphs" stroke="#cccccc" stroke-width="0.16">.</text>
<text x="348.20" y="356.85" font-size="8.2" fill="#dcdcaa" font-family='"Liberation Mono", monospace' textLength="34.80" lengthAdjust="spacingAndGlyphs" stroke="#dcdcaa" stroke-width="0.16">getBytes</text>
<text x="383.00" y="356.85" font-size="8.2" fill="#da70d6" font-family='"Liberation Mono", monospace' textLength="4.35" lengthAdjust="spacingAndGlyphs" stroke="#da70d6" stroke-width="0.16">(</text>
<text x="387.35" y="356.85" font-size="8.2" fill="#da70d6" font-family='"Liberation Mono", monospace' textLength="4.35" lengthAdjust="spacingAndGlyphs" stroke="#da70d6" stroke-width="0.16">)</text>
<text x="391.70" y="356.85" font-size="8.2" fill="#ffd700" font-family='"Liberation Mono", monospace' textLength="4.35" lengthAdjust="spacingAndGlyphs" stroke="#ffd700" stroke-width="0.16">)</text>
<text x="396.05" y="356.85" font-size="8.2" fill="#cccccc" font-family='"Liberation Mono", monospace' textLength="4.35" lengthAdjust="spacingAndGlyphs" stroke="#cccccc" stroke-width="0.16">;</text>
<text x="269.90" y="367.54" font-size="8.2" fill="#9cdcfe" font-family='"Liberation Mono", monospace' textLength="8.70" lengthAdjust="spacingAndGlyphs" stroke="#9cdcfe" stroke-width="0.16">os</text>
<text x="278.60" y="367.54" font-size="8.2" fill="#cccccc" font-family='"Liberation Mono", monospace' textLength="4.35" lengthAdjust="spacingAndGlyphs" stroke="#cccccc" stroke-width="0.16">.</text>
<text x="282.95" y="367.54" font-size="8.2" fill="#dcdcaa" font-family='"Liberation Mono", monospace' textLength="21.75" lengthAdjust="spacingAndGlyphs" stroke="#dcdcaa" stroke-width="0.16">close</text>
<text x="304.70" y="367.54" font-size="8.2" fill="#ffd700" font-family='"Liberation Mono", monospace' textLength="4.35" lengthAdjust="spacingAndGlyphs" stroke="#ffd700" stroke-width="0.16">(</text>
<text x="309.05" y="367.54" font-size="8.2" fill="#ffd700" font-family='"Liberation Mono", monospace' textLength="4.35" lengthAdjust="spacingAndGlyphs" stroke="#ffd700" stroke-width="0.16">)</text>
<text x="313.40" y="367.54" font-size="8.2" fill="#cccccc" font-family='"Liberation Mono", monospace' textLength="4.35" lengthAdjust="spacingAndGlyphs" stroke="#cccccc" stroke-width="0.16">;</text>
<text x="252.50" y="378.23" font-size="8.2" fill="#179fff" font-family='"Liberation Mono", monospace' textLength="4.35" lengthAdjust="spacingAndGlyphs" stroke="#179fff" stroke-width="0.16">}</text>
<text x="235.10" y="388.91" font-size="8.2" fill="#da70d6" font-family='"Liberation Mono", monospace' textLength="4.35" lengthAdjust="spacingAndGlyphs" stroke="#da70d6" stroke-width="0.16">}</text>
<text x="217.70" y="399.60" font-size="8.2" fill="#ffd700" font-family='"Liberation Mono", monospace' textLength="4.35" lengthAdjust="spacingAndGlyphs" stroke="#ffd700" stroke-width="0.16">}</text>
<text x="203.30" y="78.98" font-size="8.2" fill="#6e7681" font-family='"Liberation Mono", monospace' textLength="8.70" lengthAdjust="spacingAndGlyphs" text-anchor="end" >12</text>
<text x="203.30" y="89.66" font-size="8.2" fill="#6e7681" font-family='"Liberation Mono", monospace' textLength="8.70" lengthAdjust="spacingAndGlyphs" text-anchor="end" >13</text>
<text x="203.30" y="100.35" font-size="8.2" fill="#6e7681" font-family='"Liberation Mono", monospace' textLength="8.70" lengthAdjust="spacingAndGlyphs" text-anchor="end" >14</text>
<text x="203.30" y="111.04" font-size="8.2" fill="#6e7681" font-family='"Liberation Mono", monospace' textLength="8.70" lengthAdjust="spacingAndGlyphs" text-anchor="end" >15</text>
<text x="203.30" y="121.73" font-size="8.2" fill="#cccccc" font-family='"Liberation Mono", monospace' textLength="8.70" lengthAdjust="spacingAndGlyphs" text-anchor="end" >16</text>
<text x="203.30" y="132.41" font-size="8.2" fill="#6e7681" font-family='"Liberation Mono", monospace' textLength="8.70" lengthAdjust="spacingAndGlyphs" text-anchor="end" >17</text>
<text x="203.30" y="143.10" font-size="8.2" fill="#6e7681" font-family='"Liberation Mono", monospace' textLength="8.70" lengthAdjust="spacingAndGlyphs" text-anchor="end" >18</text>
<text x="203.30" y="153.79" font-size="8.2" fill="#6e7681" font-family='"Liberation Mono", monospace' textLength="8.70" lengthAdjust="spacingAndGlyphs" text-anchor="end" >19</text>
<text x="203.30" y="164.48" font-size="8.2" fill="#6e7681" font-family='"Liberation Mono", monospace' textLength="8.70" lengthAdjust="spacingAndGlyphs" text-anchor="end" >20</text>
<text x="203.30" y="175.16" font-size="8.2" fill="#6e7681" font-family='"Liberation Mono", monospace' textLength="8.70" lengthAdjust="spacingAndGlyphs" text-anchor="end" >21</text>
<text x="203.30" y="185.85" font-size="8.2" fill="#6e7681" font-family='"Liberation Mono", monospace' textLength="8.70" lengthAdjust="spacingAndGlyphs" text-anchor="end" >22</text>
<text x="203.30" y="196.54" font-size="8.2" fill="#6e7681" font-family='"Liberation Mono", monospace' textLength="8.70" lengthAdjust="spacingAndGlyphs" text-anchor="end" >23</text>
<text x="203.30" y="207.23" font-size="8.2" fill="#6e7681" font-family='"Liberation Mono", monospace' textLength="8.70" lengthAdjust="spacingAndGlyphs" text-anchor="end" >24</text>
<text x="203.30" y="217.91" font-size="8.2" fill="#6e7681" font-family='"Liberation Mono", monospace' textLength="8.70" lengthAdjust="spacingAndGlyphs" text-anchor="end" >25</text>
<text x="203.30" y="228.60" font-size="8.2" fill="#6e7681" font-family='"Liberation Mono", monospace' textLength="8.70" lengthAdjust="spacingAndGlyphs" text-anchor="end" >26</text>
<text x="203.30" y="239.29" font-size="8.2" fill="#6e7681" font-family='"Liberation Mono", monospace' textLength="8.70" lengthAdjust="spacingAndGlyphs" text-anchor="end" >27</text>
<text x="203.30" y="249.98" font-size="8.2" fill="#6e7681" font-family='"Liberation Mono", monospace' textLength="8.70" lengthAdjust="spacingAndGlyphs" text-anchor="end" >28</text>
<text x="203.30" y="260.66" font-size="8.2" fill="#6e7681" font-family='"Liberation Mono", monospace' textLength="8.70" lengthAdjust="spacingAndGlyphs" text-anchor="end" >29</text>
<text x="203.30" y="271.35" font-size="8.2" fill="#6e7681" font-family='"Liberation Mono", monospace' textLength="8.70" lengthAdjust="spacingAndGlyphs" text-anchor="end" >30</text>
<text x="203.30" y="282.04" font-size="8.2" fill="#6e7681" font-family='"Liberation Mono", monospace' textLength="8.70" lengthAdjust="spacingAndGlyphs" text-anchor="end" >31</text>
<text x="203.30" y="292.73" font-size="8.2" fill="#6e7681" font-family='"Liberation Mono", monospace' textLength="8.70" lengthAdjust="spacingAndGlyphs" text-anchor="end" >32</text>
<text x="203.30" y="303.41" font-size="8.2" fill="#6e7681" font-family='"Liberation Mono", monospace' textLength="8.70" lengthAdjust="spacingAndGlyphs" text-anchor="end" >33</text>
<text x="203.30" y="314.10" font-size="8.2" fill="#6e7681" font-family='"Liberation Mono", monospace' textLength="8.70" lengthAdjust="spacingAndGlyphs" text-anchor="end" >34</text>
<text x="203.30" y="324.79" font-size="8.2" fill="#6e7681" font-family='"Liberation Mono", monospace' textLength="8.70" lengthAdjust="spacingAndGlyphs" text-anchor="end" >35</text>
<text x="203.30" y="335.48" font-size="8.2" fill="#6e7681" font-family='"Liberation Mono", monospace' textLength="8.70" lengthAdjust="spacingAndGlyphs" text-anchor="end" >36</text>
<text x="203.30" y="346.16" font-size="8.2" fill="#6e7681" font-family='"Liberation Mono", monospace' textLength="8.70" lengthAdjust="spacingAndGlyphs" text-anchor="end" >37</text>
<text x="203.30" y="356.85" font-size="8.2" fill="#6e7681" font-family='"Liberation Mono", monospace' textLength="8.70" lengthAdjust="spacingAndGlyphs" text-anchor="end" >38</text>
<text x="203.30" y="367.54" font-size="8.2" fill="#6e7681" font-family='"Liberation Mono", monospace' textLength="8.70" lengthAdjust="spacingAndGlyphs" text-anchor="end" >39</text>
<text x="203.30" y="378.23" font-size="8.2" fill="#6e7681" font-family='"Liberation Mono", monospace' textLength="8.70" lengthAdjust="spacingAndGlyphs" text-anchor="end" >40</text>
<text x="203.30" y="388.91" font-size="8.2" fill="#6e7681" font-family='"Liberation Mono", monospace' textLength="8.70" lengthAdjust="spacingAndGlyphs" text-anchor="end" >41</text>
<text x="203.30" y="399.60" font-size="8.2" fill="#6e7681" font-family='"Liberation Mono", monospace' textLength="8.70" lengthAdjust="spacingAndGlyphs" text-anchor="end" >42</text>
<rect x="180.60" y="51.75" width="891.40" height="21.40" fill="#1f1f1f" />
<text x="217.70" y="60.83" font-size="8.2" fill="#569cd6" font-family='"Liberation Mono", monospace' textLength="26.10" lengthAdjust="spacingAndGlyphs" stroke="#569cd6" stroke-width="0.16">public</text>
<text x="248.15" y="60.83" font-size="8.2" fill="#569cd6" font-family='"Liberation Mono", monospace' textLength="21.75" lengthAdjust="spacingAndGlyphs" stroke="#569cd6" stroke-width="0.16">class</text>
<text x="274.25" y="60.83" font-size="8.2" fill="#4ec9b0" font-family='"Liberation Mono", monospace' textLength="43.50" lengthAdjust="spacingAndGlyphs" stroke="#4ec9b0" stroke-width="0.16">HelloWorld</text>
<text x="322.10" y="60.83" font-size="8.2" fill="#ffd700" font-family='"Liberation Mono", monospace' textLength="4.35" lengthAdjust="spacingAndGlyphs" stroke="#ffd700" stroke-width="0.16">{</text>
<text x="235.10" y="71.43" font-size="8.2" fill="#569cd6" font-family='"Liberation Mono", monospace' textLength="26.10" lengthAdjust="spacingAndGlyphs" stroke="#569cd6" stroke-width="0.16">public</text>
<text x="265.55" y="71.43" font-size="8.2" fill="#569cd6" font-family='"Liberation Mono", monospace' textLength="26.10" lengthAdjust="spacingAndGlyphs" stroke="#569cd6" stroke-width="0.16">static</text>
<text x="296.00" y="71.43" font-size="8.2" fill="#569cd6" font-family='"Liberation Mono", monospace' textLength="17.40" lengthAdjust="spacingAndGlyphs" stroke="#569cd6" stroke-width="0.16">void</text>
<text x="317.75" y="71.43" font-size="8.2" fill="#dcdcaa" font-family='"Liberation Mono", monospace' textLength="17.40" lengthAdjust="spacingAndGlyphs" stroke="#dcdcaa" stroke-width="0.16">main</text>
<text x="335.15" y="71.43" font-size="8.2" fill="#da70d6" font-family='"Liberation Mono", monospace' textLength="4.35" lengthAdjust="spacingAndGlyphs" stroke="#da70d6" stroke-width="0.16">(</text>
<text x="339.50" y="71.43" font-size="8.2" fill="#4ec9b0" font-family='"Liberation Mono", monospace' textLength="26.10" lengthAdjust="spacingAndGlyphs" stroke="#4ec9b0" stroke-width="0.16">String</text>
<text x="365.60" y="71.43" font-size="8.2" fill="#179fff" font-family='"Liberation Mono", monospace' textLength="4.35" lengthAdjust="spacingAndGlyphs" stroke="#179fff" stroke-width="0.16">[</text>
<text x="369.95" y="71.43" font-size="8.2" fill="#179fff" font-family='"Liberation Mono", monospace' textLength="4.35" lengthAdjust="spacingAndGlyphs" stroke="#179fff" stroke-width="0.16">]</text>
<text x="378.65" y="71.43" font-size="8.2" fill="#9cdcfe" font-family='"Liberation Mono", monospace' textLength="17.40" lengthAdjust="spacingAndGlyphs" stroke="#9cdcfe" stroke-width="0.16">args</text>
<text x="396.05" y="71.43" font-size="8.2" fill="#da70d6" font-family='"Liberation Mono", monospace' textLength="4.35" lengthAdjust="spacingAndGlyphs" stroke="#da70d6" stroke-width="0.16">)</text>
<text x="404.75" y="71.43" font-size="8.2" fill="#569cd6" font-family='"Liberation Mono", monospace' textLength="26.10" lengthAdjust="spacingAndGlyphs" stroke="#569cd6" stroke-width="0.16">throws</text>
<text x="435.20" y="71.43" font-size="8.2" fill="#4ec9b0" font-family='"Liberation Mono", monospace' textLength="47.85" lengthAdjust="spacingAndGlyphs" stroke="#4ec9b0" stroke-width="0.16">IOException</text>
<text x="487.40" y="71.43" font-size="8.2" fill="#da70d6" font-family='"Liberation Mono", monospace' textLength="4.35" lengthAdjust="spacingAndGlyphs" stroke="#da70d6" stroke-width="0.16">{</text>
<text x="203.30" y="60.83" font-size="8.2" fill="#6e7681" font-family='"Liberation Mono", monospace' textLength="4.35" lengthAdjust="spacingAndGlyphs" text-anchor="end" >8</text>
<text x="203.30" y="71.43" font-size="8.2" fill="#6e7681" font-family='"Liberation Mono", monospace' textLength="4.35" lengthAdjust="spacingAndGlyphs" text-anchor="end" >9</text>
<rect x="180.60" y="73.00" width="891.40" height="0.80" fill="#0a0a0a" />
<rect x="180.60" y="73.80" width="891.40" height="0.80" fill="rgba(0,0,0,0.35)" />
<rect x="1072.00" y="51.75" width="8.00" height="373.00" fill="#1c1c1c" />
<rect x="1071.60" y="51.75" width="0.50" height="373.00" fill="#2a2a2a" />
<rect x="1072.00" y="51.60" width="8.00" height="0.80" fill="#141414" />
<rect x="1072.60" y="100.60" width="7.40" height="168.00" fill="rgba(121,121,121,0.40)" />
<rect x="1072.60" y="127.60" width="7.40" height="0.80" fill="#a0a0a0" />
<rect x="1077.50" y="173.00" width="2.50" height="3.00" fill="#c8a618" />
<rect x="1077.50" y="212.00" width="2.50" height="3.00" fill="#c8a618" />
<rect x="1077.50" y="231.00" width="2.50" height="3.00" fill="#c8a618" />
<rect x="180.00" y="425.00" width="900.00" height="144.00" fill="#181818" />
<rect x="180.00" y="424.60" width="900.00" height="0.60" fill="#2b2b2b" />
<text x="190.90" y="437.43" font-size="6.2" fill="#9d9d9d" textLength="31.90" lengthAdjust="spacingAndGlyphs" >PROBLEMS</text>
<text x="251.30" y="437.43" font-size="6.2" fill="#9d9d9d" textLength="24.10" lengthAdjust="spacingAndGlyphs" >OUTPUT</text>
<text x="289.40" y="437.43" font-size="6.2" fill="#9d9d9d" textLength="50.00" lengthAdjust="spacingAndGlyphs" >DEBUG CONSOLE</text>
<text x="353.20" y="437.43" font-size="6.2" fill="#e7e7e7" textLength="31.60" lengthAdjust="spacingAndGlyphs" >TERMINAL</text>
<text x="397.80" y="437.43" font-size="6.2" fill="#9d9d9d" textLength="19.40" lengthAdjust="spacingAndGlyphs" >PORTS</text>
<rect x="353.20" y="440.60" width="31.60" height="0.60" fill="#e7e7e7" />
<circle cx="233.8" cy="435.2" r="4.6" fill="#616161"/>
<circle cx="428" cy="435.2" r="4.6" fill="#616161"/>
<text x="233.80" y="437.78" font-size="6.6" fill="#f0f0f0" text-anchor="middle" >3</text>
<text x="428.00" y="437.78" font-size="6.6" fill="#f0f0f0" text-anchor="middle" >1</text>
<g fill="none" stroke="#b0b0b0" stroke-width="0.8"><rect x="930.4" y="431" width="7.4" height="7.6"/><line x1="934.1" y1="431" x2="934.1" y2="438.6"/></g>
<text x="940.00" y="437.42" font-size="7.0" fill="#cccccc" textLength="36.30" lengthAdjust="spacingAndGlyphs" >java - project</text>
<g fill="none" stroke="#c4bcd8" stroke-width="0.8"><rect x="983.4" y="431" width="7.4" height="7.6"/><line x1="987.1" y1="431" x2="987.1" y2="438.6"/></g>
<path d="M994.2 434 L996.2 436 L998.2 434" fill="none" stroke="#cccccc" stroke-width="0.7"/>
<g fill="none" stroke="#d4c4c4" stroke-width="0.8"><rect x="1005.4" y="431" width="7.4" height="7.6"/><line x1="1009.1" y1="431" x2="1009.1" y2="438.6"/></g>
<path d="M1020 432.4 H1026 M1021 432.4 V438.8 H1025 V432.4 M1022 431.2 H1024" fill="none" stroke="#c0a0d0" stroke-width="0.8"/><rect x="1021.4" y="433.2" width="3.2" height="5.2" fill="#a080b0"/>
<circle cx="1034.8" cy="435.2" r="0.65" fill="#cccccc"/>
<circle cx="1038" cy="435.2" r="0.65" fill="#cccccc"/>
<circle cx="1041.2" cy="435.2" r="0.65" fill="#cccccc"/>
<path d="M1049.4 436.8 L1052.6 433.6 L1055.8 436.8" fill="none" stroke="#cccccc" stroke-width="0.8"/>
<path d="M1064.6 432 L1070 437.6 M1070 432 L1064.6 437.6" stroke="#cccccc" stroke-width="0.8"/>
<rect x="1072.00" y="444.20" width="0.60" height="105.00" fill="#262626" />
<rect x="1075.40" y="444.60" width="4.60" height="0.60" fill="#3a3a3a" />
<rect x="1073.40" y="443.80" width="2.00" height="2.20" fill="#3794ff" />
<rect x="1073.60" y="452.50" width="1.60" height="3.50" fill="#555555" />
<circle cx="185.3" cy="448.7" r="1.5" fill="#3794ff"/>
<circle cx="185.3" cy="458.3" r="1.3" fill="none" stroke="#888888" stroke-width="0.6"/>
<text x="190.90" y="451.44" font-size="7.6" fill="#23d18b" font-family='"Liberation Mono", monospace' textLength="51.61" lengthAdjust="spacingAndGlyphs" stroke="#23d18b" stroke-width="0.14">sealos@devbox</text>
<text x="242.51" y="451.44" font-size="7.6" fill="#cccccc" font-family='"Liberation Mono", monospace' textLength="3.97" lengthAdjust="spacingAndGlyphs" stroke="#cccccc" stroke-width="0.14">:</text>
<text x="246.48" y="451.44" font-size="7.6" fill="#3b8eea" font-family='"Liberation Mono", monospace' textLength="35.73" lengthAdjust="spacingAndGlyphs" stroke="#3b8eea" stroke-width="0.14">~/project</text>
<text x="282.21" y="451.44" font-size="7.6" fill="#cccccc" font-family='"Liberation Mono", monospace' textLength="91.31" lengthAdjust="spacingAndGlyphs" stroke="#cccccc" stroke-width="0.14">$ javac HelloWorld.java</text>
<text x="190.90" y="461.04" font-size="7.6" fill="#23d18b" font-family='"Liberation Mono", monospace' textLength="51.61" lengthAdjust="spacingAndGlyphs" stroke="#23d18b" stroke-width="0.14">sealos@devbox</text>
<text x="242.51" y="461.04" font-size="7.6" fill="#cccccc" font-family='"Liberation Mono", monospace' textLength="3.97" lengthAdjust="spacingAndGlyphs" stroke="#cccccc" stroke-width="0.14">:</text>
<text x="246.48" y="461.04" font-size="7.6" fill="#3b8eea" font-family='"Liberation Mono", monospace' textLength="35.73" lengthAdjust="spacingAndGlyphs" stroke="#3b8eea" stroke-width="0.14">~/project</text>
<text x="282.21" y="461.04" font-size="7.6" fill="#cccccc" font-family='"Liberation Mono", monospace' textLength="67.49" lengthAdjust="spacingAndGlyphs" stroke="#cccccc" stroke-width="0.14">$ java HelloWorld</text>
<text x="190.90" y="470.94" font-size="7.6" fill="#cccccc" font-family='"Liberation Mono", monospace' textLength="154.83" lengthAdjust="spacingAndGlyphs" stroke="#cccccc" stroke-width="0.14">Server started at http://localhost:8088</text>
<text x="190.90" y="480.44" font-size="7.6" fill="#cccccc" font-family='"Liberation Mono", monospace' textLength="123.07" lengthAdjust="spacingAndGlyphs" stroke="#cccccc" stroke-width="0.14">Press Ctrl+C to stop the server</text>
<rect x="190.90" y="483.00" width="4.10" height="9.30" fill="#cccccc" />
<text x="591.00" y="564.80" font-size="5.0" fill="#7a7a7a" textLength="77.50" lengthAdjust="spacingAndGlyphs" >Ctrl+K to generate a command</text>
<rect x="0.00" y="568.40" width="1080.00" height="0.60" fill="#2b2b2b" />
<rect x="0.00" y="569.00" width="1080.00" height="12.00" fill="#181818" />
<rect x="0.00" y="569.00" width="151.60" height="12.00" fill="#0078d4" />
<path d="M7 579 L10.6 575.4 M8.6 573.4 L12.6 577.4 M10.6 571.4 L8.6 573.4 M12.6 573.4 L10.6 575.4" stroke="#ffffff" stroke-width="0.8" fill="none"/>
<text x="15.50" y="577.95" font-size="6.8" fill="#ffffff" textLength="131.00" lengthAdjust="spacingAndGlyphs" >SSH: hzh.sealos.run-ns-us4sp7ie-devbox-0...</text>
<circle cx="160" cy="575" r="3" fill="none" stroke="#cccccc" stroke-width="0.7"/><path d="M158.6 573.6 L161.4 576.4 M161.4 573.6 L158.6 576.4" stroke="#cccccc" stroke-width="0.6"/>
<text x="166.00" y="577.95" font-size="6.8" fill="#cccccc" textLength="3.40" lengthAdjust="spacingAndGlyphs" >0</text>
<path d="M176 571.8 L179.3 578 H172.7 Z" fill="none" stroke="#cccccc" stroke-width="0.7"/>
<text x="181.00" y="577.95" font-size="6.8" fill="#cccccc" textLength="3.40" lengthAdjust="spacingAndGlyphs" >3</text>
<path d="M195 572 L198 576 L201 572 M198 576 V578.6 M196.5 572 L198 574 L199.5 572" fill="none" stroke="#cccccc" stroke-width="0.7"/>
<text x="204.00" y="577.95" font-size="6.8" fill="#cccccc" textLength="2.60" lengthAdjust="spacingAndGlyphs" >1</text>
<path d="M216 575.5 H219.5 V572.5 L223 575.5 L219.5 578.5 V575.5 M216.5 573 V578" fill="none" stroke="#cccccc" stroke-width="0.7"/>
<text x="233.30" y="577.95" font-size="6.8" fill="#cccccc" textLength="60.00" lengthAdjust="spacingAndGlyphs" >Indexing completed.</text>
<path d="M304 573.5 H309 V577.5 C309 578.5 304 578.5 304 577.5 Z M309 574.5 H310.5 V576 H309 M305.5 571 C305 572 306 572.5 305.5 573" fill="none" stroke="#cccccc" stroke-width="0.7"/>
<text x="312.20" y="577.95" font-size="6.8" fill="#cccccc" textLength="34.50" lengthAdjust="spacingAndGlyphs" >Java: Ready</text>
<text x="870.00" y="577.95" font-size="6.8" fill="#cccccc" textLength="34.90" lengthAdjust="spacingAndGlyphs" >Ln 16, Col 9</text>
<text x="913.80" y="577.95" font-size="6.8" fill="#cccccc" textLength="27.80" lengthAdjust="spacingAndGlyphs" >Spaces: 4</text>
<text x="950.40" y="577.95" font-size="6.8" fill="#cccccc" textLength="18.00" lengthAdjust="spacingAndGlyphs" >UTF-8</text>
<text x="977.30" y="577.95" font-size="6.8" fill="#cccccc" textLength="6.70" lengthAdjust="spacingAndGlyphs" >LF</text>
<text x="1002.70" y="577.95" font-size="6.8" fill="#cccccc" textLength="12.90" lengthAdjust="spacingAndGlyphs" >Java</text>
<text x="1022.70" y="577.95" font-size="6.8" fill="#cccccc" textLength="31.70" lengthAdjust="spacingAndGlyphs" >Cursor Tab</text>
<text x="992.20" y="577.95" font-size="6.8" fill="#cccccc" textLength="2.60" lengthAdjust="spacingAndGlyphs" >{</text>
<text x="997.00" y="577.95" font-size="6.8" fill="#cccccc" textLength="2.60" lengthAdjust="spacingAndGlyphs" >}</text>
<path d="M1066 578 H1071.5 M1066.8 578 V574.5 C1066.8 572 1070.7 572 1070.7 574.5 V578 M1068 579.3 H1069.5" fill="none" stroke="#cccccc" stroke-width="0.7"/><circle cx="1071" cy="572.5" r="1.1" fill="#cccccc"/>
<rect x="4.5" y="500" width="258" height="64" rx="4" fill="rgba(0,0,0,0.35)" filter="url(#blur)"/>
<rect x="6.70" y="501.30" width="253.70" height="60.00" fill="#1f1f1f" rx="3" stroke="#343434" stroke-width="0.7"/>
<circle cx="16.7" cy="513.5" r="4.2" fill="none" stroke="#3794ff" stroke-width="0.8"/><rect x="16.3" y="512.3" width="0.8" height="3.4" fill="#3794ff"/><rect x="16.3" y="510.8" width="0.8" height="0.8" fill="#3794ff"/>
<text x="23.70" y="516.13" font-size="7.3" fill="#cccccc" textLength="162.50" lengthAdjust="spacingAndGlyphs" >Your application running on port 8088 is available.</text>
<text x="189.20" y="516.13" font-size="7.3" fill="#4daafc" textLength="18.90" lengthAdjust="spacingAndGlyphs" >See all</text>
<text x="23.70" y="528.73" font-size="7.3" fill="#4daafc" textLength="52.50" lengthAdjust="spacingAndGlyphs" >forwarded ports</text>
<g transform="translate(233.8,513.5)" fill="#cccccc"><circle r="2.75" fill="none" stroke="#cccccc" stroke-width="1.05"/><rect x="-0.55" y="-4.3" width="1.1" height="1.2" transform="rotate(0)"/><rect x="-0.55" y="-4.3" width="1.1" height="1.2" transform="rotate(45)"/><rect x="-0.55" y="-4.3" width="1.1" height="1.2" transform="rotate(90)"/><rect x="-0.55" y="-4.3" width="1.1" height="1.2" transform="rotate(135)"/><rect x="-0.55" y="-4.3" width="1.1" height="1.2" transform="rotate(180)"/><rect x="-0.55" y="-4.3" width="1.1" height="1.2" transform="rotate(225)"/><rect x="-0.55" y="-4.3" width="1.1" height="1.2" transform="rotate(270)"/><rect x="-0.55" y="-4.3" width="1.1" height="1.2" transform="rotate(315)"/><circle r="0.8"/></g>
<path d="M246.2 510.8 L251.6 516.2 M251.6 510.8 L246.2 516.2" stroke="#cccccc" stroke-width="1.0"/>
<rect x="124.80" y="537.60" width="62.10" height="15.70" fill="#0078d4" rx="1.5" />
<text x="155.85" y="548.13" font-size="7.3" fill="#ffffff" textLength="49.00" lengthAdjust="spacingAndGlyphs" text-anchor="middle" >Open in Browser</text>
<rect x="192.40" y="537.60" width="61.60" height="15.70" fill="#313131" rx="1.5" />
<text x="223.40" y="548.13" font-size="7.3" fill="#cccccc" textLength="49.50" lengthAdjust="spacingAndGlyphs" text-anchor="middle" >Preview in Editor</text>
<rect x="346.80" y="424.80" width="46.20" height="16.40" rx="1.2" fill="none" stroke="#e22a24" stroke-width="1.6"/>
<rect x="287.80" y="441.60" width="94.00" height="23.30" rx="1.2" fill="none" stroke="#e22a24" stroke-width="1.6"/>
<rect x="118.60" y="533.20" width="72.70" height="25.50" rx="1.2" fill="none" stroke="#e22a24" stroke-width="1.6"/>
<path d="M399.43 409.39 L381.67 418.43 L382.58 420.09 L399.77 410.01 Z" fill="#e22a24"/>
<path d="M377.30 421.90 L381.71 415.38 L382.13 419.26 L385.17 421.70 Z" fill="#e22a24"/>
<path d="M402.18 471.00 L388.52 462.27 L387.56 463.91 L401.82 471.60 Z" fill="#e22a24"/>
<path d="M383.30 460.30 L391.16 460.75 L388.04 463.09 L387.51 466.95 Z" fill="#e22a24"/>
<path d="M223.80 528.96 L198.53 535.57 L199.05 537.40 L224.00 529.64 Z" fill="#e22a24"/>
<path d="M193.50 538.00 L199.24 532.61 L198.79 536.49 L201.22 539.54 Z" fill="#e22a24"/>
<text x="371.30" y="405.30" font-size="8.9" fill="#e22a24" textLength="7.00" lengthAdjust="spacingAndGlyphs" stroke="#e22a24" stroke-width="0.3">1.</text>
<text x="402.20" y="405.30" font-size="8.9" fill="#e22a24" textLength="45.00" lengthAdjust="spacingAndGlyphs" stroke="#e22a24" stroke-width="0.3">TERMINAL</text>
<text x="409.10" y="477.60" font-size="8.9" fill="#e22a24" textLength="7.00" lengthAdjust="spacingAndGlyphs" stroke="#e22a24" stroke-width="0.3">2.</text>
<text x="230.60" y="529.20" font-size="8.9" fill="#e22a24" textLength="6.60" lengthAdjust="spacingAndGlyphs" stroke="#e22a24" stroke-width="0.3">3.</text>
<g transform="translate(380.70,397.40) scale(0.8400)" fill="none" stroke="#e22a24" stroke-width="1.310" stroke-linecap="square" stroke-linejoin="miter"><path d="M3.2 0.6 L2.4 2.4"/><path d="M2.6 2.3 H8.6"/><path d="M5.6 0.4 V4.6"/><path d="M2.2 4.6 H9.4"/><path d="M4.6 4.8 L3.6 7.6"/><path d="M6.6 4.8 V7.2 H9"/><path d="M0.9 0.9 L1.6 1.9"/><path d="M0.4 3.6 H1.6 V7.6 L0.5 8.7"/><path d="M1.6 8.1 Q3 9.2 9.6 9.2"/></g>
<g transform="translate(389.70,397.40) scale(0.8400)" fill="none" stroke="#e22a24" stroke-width="1.310" stroke-linecap="square" stroke-linejoin="miter"><path d="M0.3 3.2 H3.3"/><path d="M1.8 0.4 V8.8 L1.0 8.2"/><path d="M0.3 6.8 L3.3 5.4"/><path d="M4.2 1 H9 L5.2 4.6"/><path d="M5.2 1.6 L9.6 4.6"/><path d="M4.2 5.8 H9.6"/><path d="M4.6 7.6 H9.2"/><path d="M6.9 4.8 V9.7"/></g>
<g transform="translate(419.00,469.60) scale(0.8600)" fill="none" stroke="#e22a24" stroke-width="1.279" stroke-linecap="square" stroke-linejoin="miter"><path d="M3 0.4 L2 2.6"/><path d="M2.2 2.6 H8.6"/><path d="M5.2 0.3 V5"/><path d="M0.5 5 H9.5"/><path d="M3.8 5 L3.4 7.6 L1 9.3"/><path d="M6.2 5 V8.6 Q6.3 9.2 9.3 9.1 V7.9"/></g>
<g transform="translate(427.97,469.60) scale(0.8600)" fill="none" stroke="#e22a24" stroke-width="1.279" stroke-linecap="square" stroke-linejoin="miter"><path d="M8.6 0.4 L2 1.6"/><path d="M2 1.6 V6 L0.8 9.4"/><path d="M2 3.6 H9.6"/><path d="M3.6 5.6 H8.8 V9.2 H3.6 Z"/></g>
<g transform="translate(436.94,469.60) scale(0.8600)" fill="none" stroke="#e22a24" stroke-width="1.279" stroke-linecap="square" stroke-linejoin="miter"><path d="M0.5 2 H3.8"/><path d="M2.2 0.4 L1 4.6 H4"/><path d="M0.4 7.2 L4 6.4"/><path d="M2.6 3 V9.6"/><path d="M7 0.3 L4.5 3"/><path d="M7 0.3 L9.7 3"/><path d="M5.6 3.6 H8.4"/><path d="M5 4.6 V9.6"/><path d="M5 4.6 H7 V9.3"/><path d="M5 6.2 H7"/><path d="M5 7.8 H7"/><path d="M8.4 5 V7.6"/><path d="M9.6 4.4 V9.6"/></g>
<g transform="translate(445.91,469.60) scale(0.8600)" fill="none" stroke="#e22a24" stroke-width="1.279" stroke-linecap="square" stroke-linejoin="miter"><path d="M3.4 0.8 L5 1.4 V4.2 L1 9.4"/><path d="M5 4.2 L9.6 9.4"/></g>
<g transform="translate(454.88,469.60) scale(0.8600)" fill="none" stroke="#e22a24" stroke-width="1.279" stroke-linecap="square" stroke-linejoin="miter"><path d="M5 0.3 L0.5 4.2"/><path d="M5 0.3 L9.5 4.2"/><path d="M3 4 H7"/><path d="M1.4 5.6 H4.4 V8.6 H1.4 Z"/><path d="M6 5.6 H9 V8.2 H8"/><path d="M6 5.6 V9.8"/></g>
<g transform="translate(463.85,469.60) scale(0.8600)" fill="none" stroke="#e22a24" stroke-width="1.279" stroke-linecap="square" stroke-linejoin="miter"><path d="M5 0.3 L0.5 4.6"/><path d="M5 0.3 L9.5 4.6"/><path d="M4.4 3 L5.6 4.2"/><path d="M2.4 5.6 H8 L5 9.8 L2.4 7.6"/></g>
<g transform="translate(240.40,521.30) scale(0.8400)" fill="none" stroke="#e22a24" stroke-width="1.310" stroke-linecap="square" stroke-linejoin="miter"><path d="M0.3 3.2 H3.3"/><path d="M1.8 0.4 V8.8 L1.0 8.2"/><path d="M0.3 7 L3.3 5.6"/><path d="M4 1.8 H9.7"/><path d="M7.2 1.8 V9.3 L6 8.6"/></g>
<g transform="translate(249.36,521.30) scale(0.8400)" fill="none" stroke="#e22a24" stroke-width="1.310" stroke-linecap="square" stroke-linejoin="miter"><path d="M1 1.3 H9"/><path d="M0.3 4.9 H9.7"/><path d="M3.5 1.3 V6 L1 9.4"/><path d="M6.8 1.3 V9.6"/></g>
<g transform="translate(258.32,521.30) scale(0.8400)" fill="none" stroke="#e22a24" stroke-width="1.310" stroke-linecap="square" stroke-linejoin="miter"><path d="M0.5 1 L1.5 2"/><path d="M0.3 3.8 L1.3 4.8"/><path d="M0.3 8.6 L1.8 6"/><path d="M4.6 0.4 L5 1.5"/><path d="M2.6 2.3 H7"/><path d="M3 3 L6.6 8.6"/><path d="M6.6 3 L2.8 9"/><path d="M8 3 V7"/><path d="M9.5 0.4 V9.5 L8.8 9"/></g>
<g transform="translate(267.28,521.30) scale(0.8400)" fill="none" stroke="#e22a24" stroke-width="1.310" stroke-linecap="square" stroke-linejoin="miter"><path d="M1.5 0.4 V4"/><path d="M3 0.4 V4"/><path d="M5.4 0.4 L4.5 2"/><path d="M5 1.5 H9"/><path d="M6.2 2.6 L7 3.6"/><path d="M2.4 4.6 H7.6 V7.2"/><path d="M2.4 4.6 V7.2"/><path d="M4.4 5.6 L3.6 8 L1 9.6"/><path d="M5.8 5.6 V8.6 Q5.9 9.1 9.5 9 V8"/></g>
<g transform="translate(276.24,521.30) scale(0.8400)" fill="none" stroke="#e22a24" stroke-width="1.310" stroke-linecap="square" stroke-linejoin="miter"><path d="M1 0.5 H4 V3 H1 Z"/><path d="M6 0.5 H9 V3 H6 Z"/><path d="M0.3 4.8 H9.7"/><path d="M5 3.3 V4.8 L1.5 6.5"/><path d="M5 4.8 L8.5 6.5"/><path d="M7 3.5 L7.7 4.2"/><path d="M1 6.8 H4 V9.5 H1 Z"/><path d="M6 6.8 H9 V9.5 H6 Z"/></g>
<g transform="translate(285.20,521.30) scale(0.8400)" fill="none" stroke="#e22a24" stroke-width="1.310" stroke-linecap="square" stroke-linejoin="miter"><path d="M0.5 1 H3.8 L2 3"/><path d="M2 3 L3.5 4"/><path d="M0.3 4.6 H4 L3.2 5.6"/><path d="M2.3 4.6 V9.3 L1.5 8.8"/><path d="M5 1 H9.7"/><path d="M7.3 1 L6.8 2.5"/><path d="M5.5 2.5 H9 V7.3 H5.5 Z"/><path d="M7.2 4 V7"/><path d="M6.5 7.6 L5 9.6"/><path d="M8 7.6 L9.7 9.6"/></g>
<g transform="translate(294.16,521.30) scale(0.8400)" fill="none" stroke="#e22a24" stroke-width="1.310" stroke-linecap="square" stroke-linejoin="miter"><path d="M1.5 0.4 V4"/><path d="M3 0.4 V4"/><path d="M5.4 0.4 L4.5 2"/><path d="M5 1.5 H9"/><path d="M6.2 2.6 L7 3.6"/><path d="M2.4 4.6 H7.6 V7.2"/><path d="M2.4 4.6 V7.2"/><path d="M4.4 5.6 L3.6 8 L1 9.6"/><path d="M5.8 5.6 V8.6 Q5.9 9.1 9.5 9 V8"/></g>
</svg></body></html>
